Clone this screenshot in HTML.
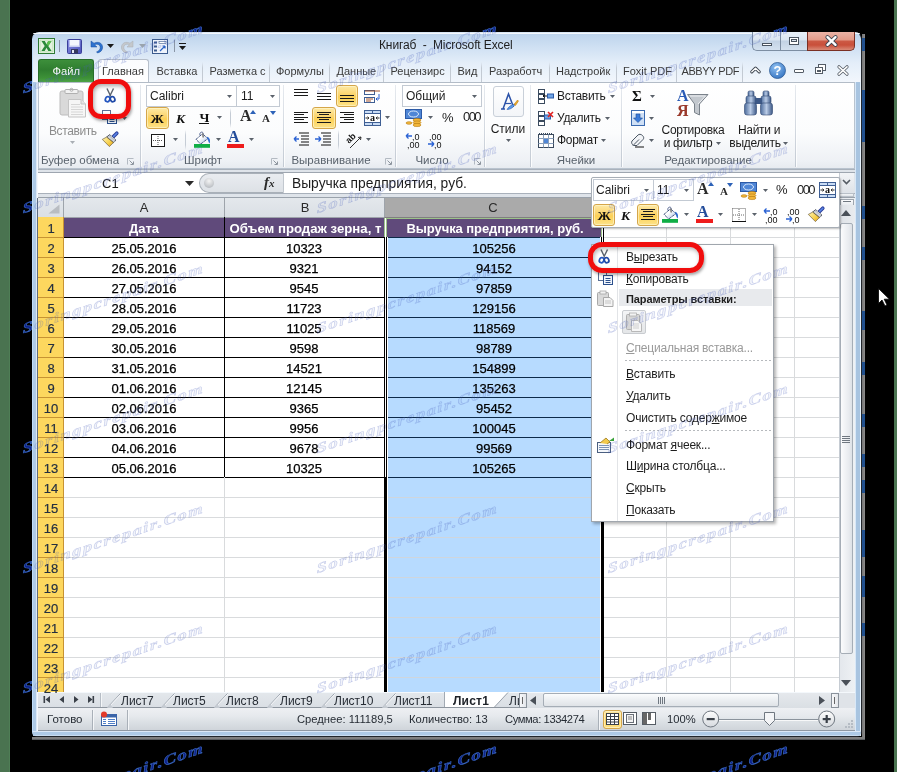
<!DOCTYPE html><html><head><meta charset="utf-8"><style>
*{margin:0;padding:0;box-sizing:border-box}
body{width:897px;height:772px;overflow:hidden;position:relative;background:#000;font-family:"Liberation Sans",sans-serif}
.a{position:absolute}
svg.a{overflow:visible}
.t{position:absolute;white-space:nowrap;font-size:12px;line-height:14px;color:#1e1e1e}
</style></head><body><div class="a" style="left:0px;top:0px;width:897px;height:772px;background:#000"></div>
<div class="a" style="left:0px;top:0px;width:10px;height:772px;background:linear-gradient(90deg,#4a7350 0,#4a7350 9px,#4f7f56 9px)"></div>
<div class="a" style="left:894px;top:0px;width:3px;height:772px;background:#4a7350"></div>
<div class="a" style="left:862px;top:34px;width:3px;height:706px;background:linear-gradient(90deg,#747474,#8c8c8c)"></div>
<div class="a" style="left:862px;top:38px;width:3px;height:13px;background:#21508e"></div>
<div class="a" style="left:862px;top:90px;width:3px;height:52px;background:#21508e"></div>
<div class="a" style="left:862px;top:206px;width:3px;height:13px;background:#21508e"></div>
<div class="a" style="left:862px;top:247px;width:3px;height:13px;background:#21508e"></div>
<div class="a" style="left:862px;top:311px;width:3px;height:19px;background:#21508e"></div>
<div class="a" style="left:862px;top:362px;width:3px;height:13px;background:#21508e"></div>
<div class="a" style="left:862px;top:414px;width:3px;height:13px;background:#21508e"></div>
<div class="a" style="left:862px;top:454px;width:3px;height:13px;background:#21508e"></div>
<div class="a" style="left:862px;top:480px;width:3px;height:13px;background:#21508e"></div>
<div class="a" style="left:862px;top:530px;width:3px;height:27px;background:#21508e"></div>
<div class="a" style="left:862px;top:576px;width:3px;height:21px;background:#21508e"></div>
<div class="a" style="left:862px;top:623px;width:3px;height:13px;background:#21508e"></div>
<div class="a" style="left:32px;top:737px;width:833px;height:3px;background:linear-gradient(#7a7a7a,#8a8a8a 40%,#4a4e53)"></div>
<div class="a" style="left:32px;top:32px;width:830px;height:705px;background:linear-gradient(#bcd3ec 0px,#cfe0f3 14px,#e4eef9 30px,#f1f6fc 48px,#f4f8fc 50px);border-radius:7px 7px 5px 5px;border:1px solid #22262c;border-left-color:#c0dcf8;border-top-color:#d8e6f4"></div>
<div class="a" style="left:33px;top:33px;width:827px;height:1px;background:#f4f8fd;border-radius:6px 6px 0 0"></div>
<div class="a" style="left:33px;top:82px;width:4px;height:654px;background:linear-gradient(90deg,#aecae6 0,#aecae6 3px,#dce8f6 3px)"></div>
<div class="a" style="left:855px;top:82px;width:6px;height:654px;background:linear-gradient(90deg,#d8e8f8 0,#d8e8f8 1px,#a8c4e0 1px,#a8c4e0 5px,#e8f4ff 5px)"></div>
<div class="a" style="left:33px;top:731px;width:828px;height:5px;background:linear-gradient(#dce8f6 0,#dce8f6 1px,#aecae6 1px,#aecae6 4px,#c8dcf0 4px);border-radius:0 0 4px 4px"></div>
<svg class="a" style="left:38px;top:38px" width="17" height="16" viewBox="0 0 17 16">
<rect x="0.5" y="0.5" width="16" height="15" fill="#f4fbf2" stroke="#2f7a35"/>
<rect x="2" y="2" width="13" height="12" fill="#e3f2de" stroke="#9fcf95" stroke-width="0.6"/>
<path d="M3.5 3 L6.8 3 L8.5 6.3 L10.2 3 L13.5 3 L10.3 8 L13.6 13 L10.3 13 L8.5 9.7 L6.7 13 L3.4 13 L6.7 8 Z" fill="#2a8a3a"/>
<path d="M8.5 6.3 L10.2 3 L13.5 3 L10.3 8 Z" fill="#5cbf4f"/>
</svg>
<div class="a" style="left:59px;top:40px;width:1px;height:12px;background:#8a96a6"></div>
<svg class="a" style="left:67px;top:39px" width="15" height="15" viewBox="0 0 15 15">
<defs><linearGradient id="sv" x1="0" y1="0" x2="1" y2="1"><stop offset="0" stop-color="#8f96e6"/><stop offset="1" stop-color="#4a4fb8"/></linearGradient></defs>
<rect x="0.5" y="0.5" width="14" height="14" rx="1" fill="url(#sv)" stroke="#3a3f9a"/>
<rect x="2.5" y="1" width="10" height="7" fill="#f4f6fd"/>
<rect x="2.5" y="6.5" width="10" height="1.5" fill="#c9cff0"/>
<rect x="4" y="10" width="7" height="4.5" fill="#35385e"/>
<rect x="5" y="11" width="2" height="3" fill="#e4e7f6"/>
</svg>
<svg class="a" style="left:89px;top:39px" width="15" height="15" viewBox="0 0 15 15">
<path d="M2 2 L2 8 L8 8 L5.6 5.8 C7.6 4.6 11 5.2 11.2 8.2 C11.4 10.8 9.4 12.2 7.6 12.8 L8.4 14 C11.6 13.4 13.8 11 13.6 8 C13.3 3.6 8.8 2.2 5 4.2 Z" fill="#2d72cf" stroke="#1a4f9c" stroke-width="0.5"/>
</svg>
<svg class="a" style="left:107px;top:44px" width="7" height="4"><polygon points="0,0 7,0 3.5,4" fill="#1a1a1a"/></svg>
<svg class="a" style="left:120px;top:39px" width="15" height="15" viewBox="0 0 15 15">
<path d="M13 2 L13 8 L7 8 L9.4 5.8 C7.4 4.6 4 5.2 3.8 8.2 C3.6 10.8 5.6 12.2 7.4 12.8 L6.6 14 C3.4 13.4 1.2 11 1.4 8 C1.7 3.6 6.2 2.2 10 4.2 Z" fill="#c4c8cc" stroke="#a8acb2" stroke-width="0.5"/>
</svg>
<svg class="a" style="left:139px;top:44px" width="7" height="4"><polygon points="0,0 7,0 3.5,4" fill="#9aa4ae"/></svg>
<svg class="a" style="left:152px;top:39px" width="16" height="15" viewBox="0 0 16 15">
<rect x="0.5" y="0.5" width="15" height="14" fill="#eef3fb" stroke="#3b5b8e"/>
<rect x="2" y="2.5" width="3" height="2" fill="#3b5b8e"/><rect x="7" y="2.5" width="7" height="2" fill="#fff" stroke="#3b5b8e" stroke-width="0.6"/>
<rect x="2" y="6.5" width="3" height="2" fill="#3b5b8e"/><rect x="2" y="10.5" width="3" height="2" fill="#3b5b8e"/>
<path d="M8 12 L13 7 M13 7 L10.5 7 M13 7 L13 9.5" stroke="#2a62c4" stroke-width="1.2" fill="none"/>
</svg>
<div class="a" style="left:174px;top:40px;width:1px;height:12px;background:#8a96a6"></div>
<div class="a" style="left:179px;top:43px;width:7px;height:1px;background:#1a1a1a"></div>
<svg class="a" style="left:179px;top:46px" width="7" height="4"><polygon points="0,0 7,0 3.5,4" fill="#1a1a1a"/></svg>
<div class="t" style="left:379px;top:37px;font-size:12px;letter-spacing:-0.12px;line-height:16px;color:#1e1e1e">Книгаб&nbsp;&nbsp;-&nbsp;&nbsp;Microsoft Excel</div>
<div class="a" style="left:752px;top:32px;width:29px;height:19px;background:linear-gradient(#e9f0f8 0px,#dae5f1 8px,#c2d2e4 9px,#d4e1ef 18px);border:1px solid #7d8ea3;border-top:none;border-right:none;border-radius:0 0 0 5px"></div>
<div class="a" style="left:762px;top:43px;width:10px;height:3px;background:#fff;border:1px solid #4a5460"></div>
<div class="a" style="left:780px;top:32px;width:28px;height:19px;background:linear-gradient(#e9f0f8 0px,#dae5f1 8px,#c2d2e4 9px,#d4e1ef 18px);border:1px solid #7d8ea3;border-top:none"></div>
<div class="a" style="left:789px;top:37px;width:10px;height:8px;background:#fff;border:1px solid #4a5460"></div>
<div class="a" style="left:791px;top:39px;width:6px;height:3px;background:#dde6f0;border:1px solid #4a5460"></div>
<div class="a" style="left:807px;top:32px;width:48px;height:19px;background:linear-gradient(#eab3a6 0px,#e39a88 8px,#cc5a45 9px,#c94f3a 13px,#d98a77 18px);border:1px solid #7a3024;border-top:none;border-radius:0 0 5px 0"></div>
<svg class="a" style="left:825px;top:35px" width="13" height="12" viewBox="0 0 13 12"><path d="M2.5 2.2 L10.5 9.8 M10.5 2.2 L2.5 9.8" stroke="#3c4450" stroke-width="4.2" stroke-linecap="round"/><path d="M2.5 2.2 L10.5 9.8 M10.5 2.2 L2.5 9.8" stroke="#fff" stroke-width="2.4" stroke-linecap="round"/></svg>
<div class="a" style="left:38px;top:59px;width:56px;height:24px;background:linear-gradient(#3d8f3b 0px,#2f7d2f 10px,#3d9138 18px,#52a84a 23px);border:1px solid #286d2a;border-bottom:none;border-radius:3px 3px 0 0"></div>
<div class="t" style="left:52.5px;top:64px;font-size:11.2px;line-height:14px;color:#fff">Файл</div>
<div class="a" style="left:98px;top:59px;width:51px;height:24px;background:linear-gradient(#fbfcfe,#ffffff);border:1px solid #b7bfca;border-bottom:none;border-radius:3px 3px 0 0"></div>
<div class="t" style="left:102px;top:64px;font-size:11px;line-height:14px;color:#3a3a3a">Главная</div>
<div class="t" style="left:156.5px;top:64px;font-size:11px;line-height:14px;color:#3a3a3a">Вставка</div>
<div class="t" style="left:209.5px;top:64px;font-size:11px;line-height:14px;color:#3a3a3a">Разметка с</div>
<div class="t" style="left:276px;top:64px;font-size:11px;line-height:14px;color:#3a3a3a">Формулы</div>
<div class="t" style="left:336.5px;top:64px;font-size:11px;line-height:14px;color:#3a3a3a">Данные</div>
<div class="t" style="left:390.5px;top:64px;font-size:11px;line-height:14px;color:#3a3a3a">Рецензирс</div>
<div class="t" style="left:457.5px;top:64px;font-size:11px;line-height:14px;color:#3a3a3a">Вид</div>
<div class="t" style="left:489px;top:64px;font-size:11px;line-height:14px;color:#3a3a3a">Разработч</div>
<div class="t" style="left:556px;top:64px;font-size:11px;line-height:14px;color:#3a3a3a">Надстройк</div>
<div class="t" style="left:623px;top:64px;font-size:11px;line-height:14px;color:#3a3a3a">Foxit PDF</div>
<div class="t" style="left:681.5px;top:64px;font-size:11px;line-height:14px;color:#3a3a3a;letter-spacing:-0.45px">ABBYY PDF</div>
<div class="a" style="left:202px;top:62px;width:1px;height:20px;background:linear-gradient(rgba(200,208,218,0),#c3cad3 30%,#c3cad3)"></div>
<div class="a" style="left:269px;top:62px;width:1px;height:20px;background:linear-gradient(rgba(200,208,218,0),#c3cad3 30%,#c3cad3)"></div>
<div class="a" style="left:329px;top:62px;width:1px;height:20px;background:linear-gradient(rgba(200,208,218,0),#c3cad3 30%,#c3cad3)"></div>
<div class="a" style="left:383px;top:62px;width:1px;height:20px;background:linear-gradient(rgba(200,208,218,0),#c3cad3 30%,#c3cad3)"></div>
<div class="a" style="left:450px;top:62px;width:1px;height:20px;background:linear-gradient(rgba(200,208,218,0),#c3cad3 30%,#c3cad3)"></div>
<div class="a" style="left:481px;top:62px;width:1px;height:20px;background:linear-gradient(rgba(200,208,218,0),#c3cad3 30%,#c3cad3)"></div>
<div class="a" style="left:549px;top:62px;width:1px;height:20px;background:linear-gradient(rgba(200,208,218,0),#c3cad3 30%,#c3cad3)"></div>
<div class="a" style="left:616px;top:62px;width:1px;height:20px;background:linear-gradient(rgba(200,208,218,0),#c3cad3 30%,#c3cad3)"></div>
<div class="a" style="left:676px;top:62px;width:1px;height:20px;background:linear-gradient(rgba(200,208,218,0),#c3cad3 30%,#c3cad3)"></div>
<div class="a" style="left:742px;top:62px;width:1px;height:20px;background:linear-gradient(rgba(200,208,218,0),#c3cad3 30%,#c3cad3)"></div>
<svg class="a" style="left:750px;top:66px" width="11" height="8"><path d="M1.8 5.8 L5.5 2.2 L9.2 5.8" stroke="#3d4550" stroke-width="3.2" fill="none" stroke-linecap="round" stroke-linejoin="round"/><path d="M1.8 5.8 L5.5 2.2 L9.2 5.8" stroke="#fff" stroke-width="1.3" fill="none" stroke-linecap="round" stroke-linejoin="round"/></svg>
<svg class="a" style="left:769px;top:62px" width="17" height="17" viewBox="0 0 17 17"><defs><radialGradient id="hg" cx="0.4" cy="0.3" r="0.8"><stop offset="0" stop-color="#8fc0f2"/><stop offset="1" stop-color="#2f6fbf"/></radialGradient></defs><circle cx="8.5" cy="8.5" r="8" fill="url(#hg)" stroke="#2e5c96" stroke-width="0.8"/><text x="8.5" y="13.3" text-anchor="middle" font-family="Liberation Sans" font-weight="bold" font-size="13" fill="#fff">?</text></svg>
<div class="a" style="left:794px;top:69px;width:10px;height:4px;background:#fff;border:1px solid #545c66;border-radius:1px"></div>
<div class="a" style="left:815px;top:67px;width:8px;height:7px;background:#fff;border:1px solid #545c66"></div>
<div class="a" style="left:818px;top:64px;width:8px;height:7px;background:#fff;border:1px solid #545c66"></div>
<div class="a" style="left:815px;top:67px;width:8px;height:7px;background:#fff;border:1px solid #545c66"></div>
<div class="a" style="left:817px;top:70px;width:4px;height:2px;background:#545c66"></div>
<svg class="a" style="left:837px;top:65px" width="12" height="11" viewBox="0 0 12 11"><path d="M2 1.8 L10 9.2 M10 1.8 L2 9.2" stroke="#545c66" stroke-width="3.2" stroke-linecap="round"/><path d="M2 1.8 L10 9.2 M10 1.8 L2 9.2" stroke="#fff" stroke-width="1.6" stroke-linecap="round"/></svg>
<div class="a" style="left:38px;top:82px;width:817px;height:87px;background:linear-gradient(#ffffff 0px,#fbfcfd 50px,#eef1f5 78px,#e5e9ee 87px);border:1px solid #b9c3ce;border-top-color:#b3bcc7"></div>
<div class="a" style="left:140px;top:85px;width:1px;height:82px;background:linear-gradient(#e6eaef,#d0d6de 60%,#c3cad3)"></div>
<div class="a" style="left:141px;top:85px;width:1px;height:82px;background:rgba(255,255,255,0.8)"></div>
<div class="a" style="left:283px;top:85px;width:1px;height:82px;background:linear-gradient(#e6eaef,#d0d6de 60%,#c3cad3)"></div>
<div class="a" style="left:284px;top:85px;width:1px;height:82px;background:rgba(255,255,255,0.8)"></div>
<div class="a" style="left:395px;top:85px;width:1px;height:82px;background:linear-gradient(#e6eaef,#d0d6de 60%,#c3cad3)"></div>
<div class="a" style="left:396px;top:85px;width:1px;height:82px;background:rgba(255,255,255,0.8)"></div>
<div class="a" style="left:484px;top:85px;width:1px;height:82px;background:linear-gradient(#e6eaef,#d0d6de 60%,#c3cad3)"></div>
<div class="a" style="left:485px;top:85px;width:1px;height:82px;background:rgba(255,255,255,0.8)"></div>
<div class="a" style="left:530px;top:85px;width:1px;height:82px;background:linear-gradient(#e6eaef,#d0d6de 60%,#c3cad3)"></div>
<div class="a" style="left:531px;top:85px;width:1px;height:82px;background:rgba(255,255,255,0.8)"></div>
<div class="a" style="left:621px;top:85px;width:1px;height:82px;background:linear-gradient(#e6eaef,#d0d6de 60%,#c3cad3)"></div>
<div class="a" style="left:622px;top:85px;width:1px;height:82px;background:rgba(255,255,255,0.8)"></div>
<div class="a" style="left:795px;top:85px;width:1px;height:82px;background:linear-gradient(#e6eaef,#d0d6de 60%,#c3cad3)"></div>
<div class="a" style="left:796px;top:85px;width:1px;height:82px;background:rgba(255,255,255,0.8)"></div>
<svg class="a" style="left:59px;top:88px" width="28" height="30" viewBox="0 0 28 30">
<rect x="1" y="3" width="23" height="24" rx="2" fill="#d9d9d9" stroke="#bcbcbc"/>
<rect x="6" y="1.5" width="13" height="4" rx="1" fill="#f2f2f2" stroke="#b0b0b0"/>
<circle cx="12.5" cy="1.8" r="1.5" fill="none" stroke="#b0b0b0"/>
<path d="M9.5 11.5 L22 11.5 L26.5 16 L26.5 29 L9.5 29 Z" fill="#f6f6f6" stroke="#c4c4c4"/>
<path d="M22 11.5 L22 16 L26.5 16" fill="#e4e4e4" stroke="#c4c4c4"/>
<path d="M12 16.5 H21 M12 19 H24 M12 21.5 H24 M12 24 H24 M12 26.5 H24" stroke="#d6d6d6"/>
</svg>
<div class="t" style="left:49px;top:124px;font-size:12px;line-height:14px;color:#8d8d8d;letter-spacing:-0.4px">Вставить</div>
<svg class="a" style="left:69.5px;top:140.5px" width="5" height="3"><polygon points="0,0 5,0 2.5,3" fill="#a9aeb4"/></svg>
<svg class="a" style="left:104px;top:88px" width="12" height="15" viewBox="0 0 12 15">
<path d="M3 0.5 L6.8 8.5 M9.5 0.5 L5.6 8.5" stroke="#5a626c" stroke-width="1.4"/>
<ellipse cx="3.6" cy="11.2" rx="2.2" ry="2.6" transform="rotate(25 3.6 11.2)" fill="#fff" stroke="#2456c0" stroke-width="1.7"/>
<ellipse cx="8.6" cy="11.2" rx="2.2" ry="2.6" transform="rotate(-25 8.6 11.2)" fill="#fff" stroke="#1f4aa8" stroke-width="1.7"/>
</svg>
<svg class="a" style="left:101px;top:110px" width="17" height="14" viewBox="0 0 17 14">
<rect x="1.5" y="0.5" width="8" height="9" fill="#fff" stroke="#5a6f95"/>
<rect x="6.5" y="4.5" width="9" height="9" fill="#f2f6fc" stroke="#2b4f8c"/>
<path d="M8.5 7.5 H13.5 M8.5 9.5 H13.5 M8.5 11.5 H13.5" stroke="#2b4f8c"/>
</svg>
<svg class="a" style="left:121.5px;top:116.5px" width="5" height="3"><polygon points="0,0 5,0 2.5,3" fill="#5b626b"/></svg>
<svg class="a" style="left:102px;top:132px" width="17" height="15" viewBox="0 0 17 15">
<defs><linearGradient id="bri" x1="0" y1="0" x2="1" y2="1"><stop offset="0" stop-color="#fff5b8"/><stop offset="0.6" stop-color="#f7d04a"/><stop offset="1" stop-color="#d99a1c"/></linearGradient></defs>
<path d="M14.8 1.2 L11 5" stroke="#2c3f9a" stroke-width="3.6" stroke-linecap="round"/>
<path d="M14.8 1.2 L11.5 4.5" stroke="#5a86e8" stroke-width="1.6" stroke-linecap="round"/>
<polygon points="4.6,5.1 7.6,2.6 14,8.2 11.4,10.6" fill="#b9bec6" stroke="#3d434b" stroke-width="0.8"/>
<path d="M6.5 4.5 L12.5 9.5 M8.5 3.7 L13 7.8" stroke="#eef0f2" stroke-width="0.7"/>
<polygon points="0.3,7.4 4.6,5.1 11.4,10.6 7.4,14.6" fill="url(#bri)" stroke="#5a4a2a" stroke-width="0.6"/>
</svg>
<div class="t" style="left:-70px;width:300px;text-align:center;top:153px;font-size:11.5px;line-height:14px;color:#59626c">Буфер обмена</div>
<svg class="a" style="left:126px;top:157px" width="9" height="9"><path d="M1.5 7.5 L1.5 1.5 L7.5 1.5" stroke="#b3bac2" fill="none"/><path d="M3.5 3.5 L7 7 M7.5 4.5 L7.5 7.5 L4.5 7.5" stroke="#8d959e" stroke-width="1" fill="none"/></svg>
<div class="a" style="left:146px;top:85px;width:91px;height:22px;background:#fff;border:1px solid #c3cad3"></div>
<div class="t" style="left:150px;top:89px;font-size:12px;line-height:14px;color:#1c1c1c">Calibri</div>
<svg class="a" style="left:226.5px;top:94.5px" width="5" height="3"><polygon points="0,0 5,0 2.5,3" fill="#5b626b"/></svg>
<div class="a" style="left:236px;top:85px;width:44px;height:22px;background:#fff;border:1px solid #c3cad3"></div>
<div class="t" style="left:241px;top:89px;font-size:12px;line-height:14px;color:#1c1c1c">11</div>
<svg class="a" style="left:269.5px;top:94.5px" width="5" height="3"><polygon points="0,0 5,0 2.5,3" fill="#5b626b"/></svg>
<div class="a" style="left:146px;top:107px;width:23px;height:22px;background:linear-gradient(#fde9a6 0%,#fcd46b 45%,#fcd055 55%,#fde38b 100%);border:1px solid #d5a64a;border-radius:3px;box-shadow:inset 0 0 0 1px rgba(255,248,210,0.6)"></div>
<div class="t" style="left:150.5px;top:110.5px;font-family:'Liberation Serif';font-weight:bold;font-size:13.5px;line-height:16px;color:#111">Ж</div>
<div class="t" style="left:176px;top:110.5px;font-family:'Liberation Serif';font-weight:bold;font-style:italic;font-size:13.5px;line-height:16px;color:#111">К</div>
<div class="t" style="left:199.5px;top:109.5px;font-family:'Liberation Serif';font-weight:bold;font-size:13.5px;line-height:16px;color:#111">Ч</div>
<div class="a" style="left:199px;top:123px;width:10px;height:1px;background:#111"></div>
<svg class="a" style="left:216.5px;top:115.5px" width="5" height="3"><polygon points="0,0 5,0 2.5,3" fill="#5b626b"/></svg>
<div class="a" style="left:230px;top:108px;width:1px;height:20px;background:linear-gradient(rgba(190,198,208,0),#c5ccd5 25%,#c5ccd5 75%,rgba(190,198,208,0))"></div>
<div class="t" style="left:240px;top:107px;font-family:'Liberation Serif';font-weight:bold;font-size:16px;line-height:18px;color:#2b2b2b">A</div>
<svg class="a" style="left:250px;top:110px" width="6" height="4"><polygon points="0,4 6,4 3,0" fill="#2d62b8"/></svg>
<div class="t" style="left:262px;top:112px;font-family:'Liberation Serif';font-weight:bold;font-size:11px;line-height:13px;color:#2b2b2b">A</div>
<svg class="a" style="left:270px;top:111px" width="6" height="4"><polygon points="0,0 6,0 3,4" fill="#2d62b8"/></svg>
<svg class="a" style="left:151px;top:134px" width="14" height="13" viewBox="0 0 14 13">
<rect x="0.5" y="0.5" width="13" height="12" fill="#fff" stroke="#1a1a1a"/>
<path d="M7 2 V11 M2 6.5 H12" stroke="#555" stroke-dasharray="1 1"/>
</svg>
<svg class="a" style="left:172.5px;top:137.5px" width="5" height="3"><polygon points="0,0 5,0 2.5,3" fill="#5b626b"/></svg>
<div class="a" style="left:185px;top:130px;width:1px;height:20px;background:linear-gradient(rgba(190,198,208,0),#c5ccd5 25%,#c5ccd5 75%,rgba(190,198,208,0))"></div>
<svg class="a" style="left:194px;top:131px" width="17" height="18" viewBox="0 0 17 18">
<defs><linearGradient id="bk" x1="0" y1="0" x2="1" y2="1"><stop offset="0.4" stop-color="#ffffff"/><stop offset="1" stop-color="#9fb8e0"/></linearGradient></defs>
<path d="M2 8.4 L8.5 2.8 L13.9 7.6 L6.7 13 Z" fill="url(#bk)" stroke="#22386a" stroke-width="1" stroke-dasharray="1.2 0.6"/>
<path d="M6 4.5 C5 1 8.5 0 9.5 2.5" stroke="#4a5a8a" stroke-width="0.9" fill="none"/>
<path d="M8.8 2.5 L9.2 6.5" stroke="#666" stroke-width="1.3"/>
<path d="M12.8 5.8 C15.5 6 16.8 9.5 15.6 12.5 C14.6 11.5 14.2 9.5 13.6 8.2 Z" fill="#2f6ad0"/>
<rect x="0" y="13" width="16" height="3.8" fill="#0fae45"/>
</svg>
<svg class="a" style="left:215.5px;top:137.5px" width="5" height="3"><polygon points="0,0 5,0 2.5,3" fill="#5b626b"/></svg>
<div class="t" style="left:228px;top:129px;font-family:'Liberation Serif';font-weight:bold;font-size:16px;line-height:16px;color:#234c9a">A</div>
<div class="a" style="left:227px;top:144px;width:17px;height:4px;background:#ee1c1c"></div>
<svg class="a" style="left:248.5px;top:137.5px" width="5" height="3"><polygon points="0,0 5,0 2.5,3" fill="#5b626b"/></svg>
<div class="t" style="left:53px;width:300px;text-align:center;top:153px;font-size:11.5px;line-height:14px;color:#59626c">Шрифт</div>
<svg class="a" style="left:270px;top:157px" width="9" height="9"><path d="M1.5 7.5 L1.5 1.5 L7.5 1.5" stroke="#b3bac2" fill="none"/><path d="M3.5 3.5 L7 7 M7.5 4.5 L7.5 7.5 L4.5 7.5" stroke="#8d959e" stroke-width="1" fill="none"/></svg>
<svg class="a" style="left:294px;top:89px" width="20" height="16"><rect x="0" y="0" width="14" height="1" fill="#1a1a1a"/><rect x="0" y="3" width="14" height="1" fill="#1a1a1a"/><rect x="0" y="6" width="14" height="1" fill="#1a1a1a"/></svg>
<svg class="a" style="left:317px;top:93px" width="20" height="16"><rect x="0" y="0" width="14" height="1" fill="#1a1a1a"/><rect x="0" y="3" width="14" height="1" fill="#1a1a1a"/><rect x="0" y="6" width="14" height="1" fill="#1a1a1a"/></svg>
<div class="a" style="left:336px;top:85px;width:22px;height:22px;background:linear-gradient(#fde9a6 0%,#fcd46b 45%,#fcd055 55%,#fde38b 100%);border:1px solid #d5a64a;border-radius:3px;box-shadow:inset 0 0 0 1px rgba(255,248,210,0.6)"></div>
<svg class="a" style="left:340px;top:95px" width="20" height="16"><rect x="0" y="0" width="14" height="1" fill="#1a1a1a"/><rect x="0" y="3" width="14" height="1" fill="#1a1a1a"/><rect x="0" y="6" width="14" height="1" fill="#1a1a1a"/></svg>
<svg class="a" style="left:364px;top:88px" width="17" height="16" viewBox="0 0 17 16">
<rect x="0.5" y="2.5" width="10" height="4" fill="#fff" stroke="#3f5f94"/>
<rect x="0.5" y="9.5" width="10" height="5" fill="#fff" stroke="#3f5f94"/>
<path d="M1 3 H16" stroke="#a0522d"/>
<path d="M2 11 H9 M2 13 H7" stroke="#a0522d"/>
<path d="M15 6 V11 H12 M13.5 9.5 L12 11 L13.5 12.5" stroke="#2a5fcf" fill="none"/>
</svg>
<svg class="a" style="left:294px;top:112px" width="20" height="16"><rect x="0" y="0" width="14" height="1" fill="#1a1a1a"/><rect x="0" y="2" width="10" height="1" fill="#1a1a1a"/><rect x="0" y="5" width="14" height="1" fill="#1a1a1a"/><rect x="0" y="7" width="10" height="1" fill="#1a1a1a"/><rect x="0" y="10" width="14" height="1" fill="#1a1a1a"/></svg>
<div class="a" style="left:312px;top:107px;width:24px;height:22px;background:linear-gradient(#fde9a6 0%,#fcd46b 45%,#fcd055 55%,#fde38b 100%);border:1px solid #d5a64a;border-radius:3px;box-shadow:inset 0 0 0 1px rgba(255,248,210,0.6)"></div>
<svg class="a" style="left:317px;top:112px" width="20" height="16"><rect x="0" y="0" width="14" height="1" fill="#1a1a1a"/><rect x="2" y="2" width="10" height="1" fill="#1a1a1a"/><rect x="0" y="5" width="14" height="1" fill="#1a1a1a"/><rect x="2" y="7" width="10" height="1" fill="#1a1a1a"/><rect x="0" y="10" width="14" height="1" fill="#1a1a1a"/></svg>
<svg class="a" style="left:340px;top:112px" width="20" height="16"><rect x="0" y="0" width="14" height="1" fill="#1a1a1a"/><rect x="4" y="2" width="10" height="1" fill="#1a1a1a"/><rect x="0" y="5" width="14" height="1" fill="#1a1a1a"/><rect x="4" y="7" width="10" height="1" fill="#1a1a1a"/><rect x="0" y="10" width="14" height="1" fill="#1a1a1a"/></svg>
<svg class="a" style="left:364px;top:110px" width="17" height="16" viewBox="0 0 17 16">
<rect x="0.5" y="0.5" width="16" height="15" fill="#c9dcf5" stroke="#3f5f94"/>
<path d="M0.5 3.5 H16.5 M0.5 12.5 H16.5 M8.5 0.5 V3.5 M8.5 12.5 V15.5" stroke="#3f5f94"/>
<rect x="1" y="4" width="15" height="8" fill="#fff"/>
<path d="M1.5 8 H5 M12 8 H15.5" stroke="#222"/><path d="M3.5 6.5 L5 8 L3.5 9.5 M13.5 6.5 L12 8 L13.5 9.5" stroke="#222" fill="none" stroke-width="0.8"/>
<text x="8.5" y="11" text-anchor="middle" font-family="Liberation Serif" font-weight="bold" font-size="10" fill="#111">a</text>
</svg>
<svg class="a" style="left:384.5px;top:115.5px" width="5" height="3"><polygon points="0,0 5,0 2.5,3" fill="#5b626b"/></svg>
<svg class="a" style="left:293px;top:132px" width="17" height="16" viewBox="0 0 17 16">
<path d="M6 1 H16 M8 4 H16 M8 7 H16 M8 10 H16 M6 13 H16" stroke="#111" stroke-width="1.2"/>
<path d="M1 7 L6 7 M1 7 L3.5 4.5 M1 7 L3.5 9.5" stroke="#2a62d4" stroke-width="1.3" fill="none"/>
</svg>
<svg class="a" style="left:315px;top:132px" width="17" height="16" viewBox="0 0 17 16">
<path d="M6 1 H16 M8 4 H16 M8 7 H16 M8 10 H16 M6 13 H16" stroke="#111" stroke-width="1.2"/>
<path d="M0 7 L6 7 M6 7 L3.5 4.5 M6 7 L3.5 9.5" stroke="#2a62d4" stroke-width="1.3" fill="none"/>
</svg>
<div class="a" style="left:338px;top:130px;width:1px;height:20px;background:linear-gradient(rgba(190,198,208,0),#c5ccd5 25%,#c5ccd5 75%,rgba(190,198,208,0))"></div>
<svg class="a" style="left:346px;top:132px" width="18" height="17" viewBox="0 0 18 17">
<text x="0" y="0" transform="translate(3,12) rotate(-45)" font-family="Liberation Sans" font-weight="bold" font-size="9" fill="#111">ab</text>
<path d="M4 16 L15 5 M15 5 L12 5.5 M15 5 L14.5 8" stroke="#333" stroke-width="1" fill="none"/>
</svg>
<svg class="a" style="left:365.5px;top:137.5px" width="5" height="3"><polygon points="0,0 5,0 2.5,3" fill="#5b626b"/></svg>
<div class="t" style="left:181px;width:300px;text-align:center;top:153px;font-size:11.5px;line-height:14px;color:#59626c">Выравнивание</div>
<svg class="a" style="left:384px;top:157px" width="9" height="9"><path d="M1.5 7.5 L1.5 1.5 L7.5 1.5" stroke="#b3bac2" fill="none"/><path d="M3.5 3.5 L7 7 M7.5 4.5 L7.5 7.5 L4.5 7.5" stroke="#8d959e" stroke-width="1" fill="none"/></svg>
<div class="a" style="left:402px;top:85px;width:80px;height:22px;background:#fff;border:1px solid #c3cad3"></div>
<div class="t" style="left:406px;top:89px;font-size:12px;line-height:14px;color:#1c1c1c">Общий</div>
<svg class="a" style="left:471.5px;top:94.5px" width="5" height="3"><polygon points="0,0 5,0 2.5,3" fill="#5b626b"/></svg>
<svg class="a" style="left:405px;top:109px" width="18" height="18" viewBox="0 0 18 18">
<rect x="0.5" y="0.5" width="16" height="9" fill="#4f86d6" stroke="#2c5aa6"/>
<ellipse cx="8.5" cy="5" rx="5" ry="3" fill="none" stroke="#d6e6fb"/>
<ellipse cx="12" cy="11" rx="4" ry="1.6" fill="#f3b73b" stroke="#b57b10" stroke-width="0.6"/>
<ellipse cx="12" cy="13.5" rx="4" ry="1.6" fill="#f3b73b" stroke="#b57b10" stroke-width="0.6"/>
<ellipse cx="12" cy="16" rx="4" ry="1.6" fill="#f3b73b" stroke="#b57b10" stroke-width="0.6"/>
<ellipse cx="4" cy="14" rx="3" ry="1.3" fill="#f3b73b" stroke="#b57b10" stroke-width="0.6"/>
</svg>
<svg class="a" style="left:427.5px;top:115.5px" width="5" height="3"><polygon points="0,0 5,0 2.5,3" fill="#5b626b"/></svg>
<div class="t" style="left:442px;top:111px;font-size:13px;line-height:14px;color:#1c1c1c">%</div>
<div class="t" style="left:463px;top:110px;font-size:13px;line-height:14px;color:#1c1c1c;letter-spacing:-1.6px">000</div>
<svg class="a" style="left:405px;top:132px" width="18" height="16" viewBox="0 0 18 16">
<path d="M1 4 L7 4 M1 4 L3.5 1.5 M1 4 L3.5 6.5" stroke="#2a62d4" stroke-width="1.3" fill="none"/>
<text x="7" y="8" font-family="Liberation Sans" font-size="9" fill="#111">,0</text>
<text x="2" y="15.5" font-family="Liberation Sans" font-size="9" fill="#111">,00</text>
</svg>
<svg class="a" style="left:427px;top:132px" width="18" height="16" viewBox="0 0 18 16">
<text x="2" y="8" font-family="Liberation Sans" font-size="9" fill="#111">,00</text>
<path d="M1 12 L7 12 M7 12 L4.5 9.5 M7 12 L4.5 14.5" stroke="#2a62d4" stroke-width="1.3" fill="none"/>
<text x="7" y="15.5" font-family="Liberation Sans" font-size="9" fill="#111">,0</text>
</svg>
<div class="t" style="left:282px;width:300px;text-align:center;top:153px;font-size:11.5px;line-height:14px;color:#59626c">Число</div>
<svg class="a" style="left:473px;top:157px" width="9" height="9"><path d="M1.5 7.5 L1.5 1.5 L7.5 1.5" stroke="#b3bac2" fill="none"/><path d="M3.5 3.5 L7 7 M7.5 4.5 L7.5 7.5 L4.5 7.5" stroke="#8d959e" stroke-width="1" fill="none"/></svg>
<div class="a" style="left:493px;top:86px;width:31px;height:31px;background:linear-gradient(#ffffff,#f3f5f8);border:1px solid #c9d0d9;border-radius:3px"></div>
<svg class="a" style="left:500px;top:93px" width="20" height="18" viewBox="0 0 20 18">
<path d="M1 16 H5 M3 16 L8.5 1 L13.5 14" stroke="#2b52a8" stroke-width="1.5" fill="none"/>
<path d="M5 10.5 H11" stroke="#2b52a8" stroke-width="1.2"/>
<path d="M7 16.5 C9 13 12 11.5 15 11 C14 14 11 16.5 7 16.5 Z" fill="#5a9ae8" stroke="#2a5ab0" stroke-width="0.6"/>
<path d="M14 11.5 L17.5 7 L18.5 8 L15.5 12.5 Z" fill="#f0b020" stroke="#b06a10" stroke-width="0.5"/>
</svg>
<div class="t" style="left:358px;width:300px;text-align:center;top:122px;font-size:12px;line-height:14px;color:#1c1c1c">Стили</div>
<svg class="a" style="left:505.5px;top:138.5px" width="5" height="3"><polygon points="0,0 5,0 2.5,3" fill="#5b626b"/></svg>
<svg class="a" style="left:538px;top:89px" width="17" height="16" viewBox="0 0 17 16"><rect x="0.5" y="0.5" width="6" height="4" fill="#fff" stroke="#3a4a5e"/><rect x="0.5" y="5.5" width="6" height="4" fill="#fff" stroke="#3a4a5e"/><rect x="0.5" y="10.5" width="6" height="4" fill="#fff" stroke="#3a4a5e"/><rect x="9.5" y="5" width="6" height="4" fill="#6fa4e6" stroke="#2c5aa6"/><path d="M5 7 H9 M6.5 5.5 L5 7 L6.5 8.5" stroke="#111" fill="none"/></svg>
<div class="t" style="left:557px;top:89px;font-size:12px;line-height:14px;color:#1c1c1c;letter-spacing:-0.3px">Вставить</div>
<svg class="a" style="left:609.5px;top:94.5px" width="5" height="3"><polygon points="0,0 5,0 2.5,3" fill="#5b626b"/></svg>
<svg class="a" style="left:538px;top:111px" width="17" height="16" viewBox="0 0 17 16"><rect x="0.5" y="0.5" width="6" height="4" fill="#fff" stroke="#3a4a5e"/><rect x="0.5" y="5.5" width="6" height="4" fill="#fff" stroke="#3a4a5e"/><rect x="0.5" y="10.5" width="6" height="4" fill="#fff" stroke="#3a4a5e"/><rect x="6.5" y="4" width="6" height="4" fill="#6fa4e6" stroke="#2c5aa6"/><path d="M10 1 L15 6 M15 1 L10 6" stroke="#e02020" stroke-width="1.6"/></svg>
<div class="t" style="left:557px;top:111px;font-size:12px;line-height:14px;color:#1c1c1c;letter-spacing:-0.3px">Удалить</div>
<svg class="a" style="left:604.5px;top:116.5px" width="5" height="3"><polygon points="0,0 5,0 2.5,3" fill="#5b626b"/></svg>
<svg class="a" style="left:538px;top:133px" width="17" height="16" viewBox="0 0 17 16"><rect x="0.5" y="1.5" width="15" height="13" fill="#fff" stroke="#3a4a5e"/><path d="M0.5 5.5 H15.5 M0.5 10.5 H15.5 M5.5 1.5 V14.5 M10.5 1.5 V14.5" stroke="#8aa0bd"/><rect x="6" y="6" width="4" height="4" fill="#4f86d6"/><path d="M1 0.5 H15" stroke="#3a4a5e" stroke-dasharray="1 1"/></svg>
<div class="t" style="left:557px;top:133px;font-size:12px;line-height:14px;color:#1c1c1c;letter-spacing:-0.3px">Формат</div>
<svg class="a" style="left:600.5px;top:138.5px" width="5" height="3"><polygon points="0,0 5,0 2.5,3" fill="#5b626b"/></svg>
<div class="t" style="left:426px;width:300px;text-align:center;top:153px;font-size:11.5px;line-height:14px;color:#59626c">Ячейки</div>
<div class="t" style="left:632px;top:89px;font-family:'Liberation Serif';font-weight:bold;font-size:15px;line-height:14px;color:#111">Σ</div>
<svg class="a" style="left:649.5px;top:94.5px" width="5" height="3"><polygon points="0,0 5,0 2.5,3" fill="#5b626b"/></svg>
<svg class="a" style="left:631px;top:110px" width="14" height="16" viewBox="0 0 14 16">
<rect x="0.5" y="0.5" width="13" height="15" fill="#cfe0f6" stroke="#3a6ab0"/>
<rect x="1" y="1" width="12" height="2" fill="#ffffff"/>
<path d="M5 4 H9 V8 H11.5 L7 12.5 L2.5 8 H5 Z" fill="#3a7ad8" stroke="#204f9c" stroke-width="0.6"/>
</svg>
<svg class="a" style="left:648.5px;top:116.5px" width="5" height="3"><polygon points="0,0 5,0 2.5,3" fill="#5b626b"/></svg>
<svg class="a" style="left:630px;top:132px" width="16" height="16" viewBox="0 0 16 16">
<path d="M2 9 L8 3 C9 2 11 2 12.5 3.5 C14 5 14 6.5 13 7.5 L7 13.5 L3.5 13.5 C2 12.5 1 10.5 2 9 Z" fill="#f2f4f7" stroke="#4a5562"/>
<path d="M3 13.5 L9 7.5" stroke="#4a5562"/>
<path d="M5 15 H14" stroke="#111"/>
</svg>
<svg class="a" style="left:648.5px;top:138.5px" width="5" height="3"><polygon points="0,0 5,0 2.5,3" fill="#5b626b"/></svg>
<svg class="a" style="left:676px;top:87px" width="34" height="31" viewBox="0 0 34 31">
<text x="1" y="14" font-family="Liberation Serif" font-weight="bold" font-size="16" fill="#2a5bb5">A</text>
<text x="1" y="29" font-family="Liberation Serif" font-weight="bold" font-size="16" fill="#9a3a2c">Я</text>
<path d="M11.5 7.5 H32 L23.5 17 V28 L18.5 25.5 V17 Z" fill="#c3c8ce" stroke="#7a828b"/>
<path d="M14 9 H29.5 L22 17" stroke="#eef0f3" fill="none"/>
</svg>
<div class="t" style="left:543px;width:300px;text-align:center;top:123px;font-size:12px;line-height:14px;color:#1c1c1c;letter-spacing:-0.3px">Сортировка</div>
<div class="t" style="left:538px;width:300px;text-align:center;top:136px;font-size:12px;line-height:14px;color:#1c1c1c;letter-spacing:-0.3px">и фильтр</div>
<svg class="a" style="left:715.5px;top:141.5px" width="5" height="3"><polygon points="0,0 5,0 2.5,3" fill="#5b626b"/></svg>
<svg class="a" style="left:744px;top:90px" width="29" height="26" viewBox="0 0 29 26">
<defs><linearGradient id="bn" x1="0" x2="1"><stop offset="0" stop-color="#4a6a9a"/><stop offset="0.5" stop-color="#b9cbe6"/><stop offset="1" stop-color="#3c5886"/></linearGradient></defs>
<rect x="4" y="1" width="6" height="6" rx="1.5" fill="url(#bn)" stroke="#2f4670" stroke-width="0.6"/>
<rect x="19" y="1" width="6" height="6" rx="1.5" fill="url(#bn)" stroke="#2f4670" stroke-width="0.6"/>
<rect x="2" y="6" width="10" height="8" rx="2" fill="url(#bn)" stroke="#2f4670" stroke-width="0.6"/>
<rect x="17" y="6" width="10" height="8" rx="2" fill="url(#bn)" stroke="#2f4670" stroke-width="0.6"/>
<rect x="11" y="8" width="7" height="6" fill="#3c5886"/>
<rect x="0.5" y="13" width="12" height="12" rx="2.5" fill="url(#bn)" stroke="#2f4670" stroke-width="0.6"/>
<rect x="16.5" y="13" width="12" height="12" rx="2.5" fill="url(#bn)" stroke="#2f4670" stroke-width="0.6"/>
</svg>
<div class="t" style="left:609px;width:300px;text-align:center;top:123px;font-size:12px;line-height:14px;color:#1c1c1c;letter-spacing:-0.3px">Найти и</div>
<div class="t" style="left:605px;width:300px;text-align:center;top:136px;font-size:12px;line-height:14px;color:#1c1c1c;letter-spacing:-0.3px">выделить</div>
<svg class="a" style="left:782.5px;top:141.5px" width="5" height="3"><polygon points="0,0 5,0 2.5,3" fill="#5b626b"/></svg>
<div class="t" style="left:558px;width:300px;text-align:center;top:153px;font-size:11.5px;line-height:14px;color:#59626c">Редактирование</div>
<div class="a" style="left:38px;top:169px;width:817px;height:28px;background:#dfe4ea;border-top:1px solid #a9b1bb"></div>
<div class="a" style="left:38px;top:172px;width:817px;height:1px;background:#9ea6b0"></div>
<div class="a" style="left:38px;top:173px;width:801px;height:20px;background:#fff"></div>
<div class="a" style="left:38px;top:193px;width:817px;height:1px;background:#a9b1bb"></div>
<div class="a" style="left:38px;top:197px;width:817px;height:1px;background:#9aa2ab"></div>
<div class="t" style="left:102px;top:177px;font-size:13px;line-height:14px;color:#1c1c1c">C1</div>
<svg class="a" style="left:185px;top:181px" width="9" height="5"><polygon points="0,0 9,0 4.5,5" fill="#2a2a2a"/></svg>
<div class="a" style="left:199px;top:173px;width:85px;height:20px;background:linear-gradient(#e9ecf0,#dde1e6);border:1px solid #a9b0b8;border-right:1px solid #c2c8cf;border-radius:10px 0 0 10px"></div>
<svg class="a" style="left:203px;top:177px" width="12" height="12"><defs><radialGradient id="rb" cx="0.5" cy="0.3" r="0.7"><stop offset="0" stop-color="#f4f4f4"/><stop offset="1" stop-color="#b8bcc1"/></radialGradient></defs><circle cx="6" cy="6" r="5" fill="url(#rb)"/></svg>
<div class="t" style="left:264px;top:174px;font-family:'Liberation Serif';font-weight:bold;font-size:15px;line-height:16px;color:#2a2a2a"><i>f</i><span style='font-size:11px'><i>x</i></span></div>
<div class="t" style="left:292px;top:176.5px;font-size:13.8px;line-height:14px;color:#1c1c1c">Выручка предприятия, руб.</div>
<div class="a" style="left:839px;top:173px;width:15px;height:19px;background:linear-gradient(#f2f4f7,#dfe3e8);border-left:1px solid #c6ccd3"></div>
<svg class="a" style="left:842px;top:179px" width="9" height="6"><path d="M1 1 L4.5 4.5 L8 1" stroke="#555c64" stroke-width="1.6" fill="none"/></svg>
<div class="a" style="left:38px;top:198px;width:801px;height:494px;background:#fff"></div>
<div class="a" style="left:38px;top:198px;width:801px;height:19px;background:linear-gradient(#e4e8ec,#dadfe5)"></div>
<div class="a" style="left:385px;top:198px;width:218px;height:19px;background:#aaaaaa"></div>
<div class="a" style="left:38px;top:217px;width:801px;height:1px;background:#9ea4ab"></div>
<div class="a" style="left:385px;top:217px;width:218px;height:1px;background:#808080"></div>
<div class="a" style="left:384px;top:198px;width:1px;height:20px;background:#8c8c8c"></div>
<div class="a" style="left:602px;top:198px;width:1px;height:20px;background:#8c8c8c"></div>
<div class="a" style="left:63px;top:198px;width:1px;height:19px;background:#9ea4ab"></div>
<div class="a" style="left:224px;top:198px;width:1px;height:19px;background:#9ea4ab"></div>
<div class="a" style="left:384px;top:198px;width:1px;height:19px;background:#9ea4ab"></div>
<div class="a" style="left:602px;top:198px;width:1px;height:19px;background:#9ea4ab"></div>
<div class="a" style="left:666px;top:198px;width:1px;height:19px;background:#9ea4ab"></div>
<div class="a" style="left:730px;top:198px;width:1px;height:19px;background:#9ea4ab"></div>
<div class="a" style="left:794px;top:198px;width:1px;height:19px;background:#9ea4ab"></div>
<div class="t" style="left:-6px;width:300px;text-align:center;top:201px;font-size:13px;color:#2a2a2a">A</div>
<div class="t" style="left:155px;width:300px;text-align:center;top:201px;font-size:13px;color:#2a2a2a">B</div>
<div class="t" style="left:343px;width:300px;text-align:center;top:201px;font-size:13px;color:#2a2a2a">C</div>
<svg class="a" style="left:38px;top:198px" width="26" height="19"><polygon points="21.5,6.5 21.5,15.5 10.5,15.5" fill="#b9bdc2"/></svg>
<div class="a" style="left:38px;top:217px;width:26px;height:475px;background:#fdd75e"></div>
<div class="a" style="left:37px;top:198px;width:1px;height:494px;background:#5f6e80"></div>
<div class="a" style="left:63px;top:217px;width:1px;height:475px;background:#c79333"></div>
<div class="a" style="left:38px;top:237px;width:25px;height:1px;background:#c79333"></div>
<div class="t" style="left:-99px;width:300px;text-align:center;top:222px;font-size:13px;color:#253040;-webkit-text-stroke:0.2px #253040">1</div>
<div class="a" style="left:38px;top:257px;width:25px;height:1px;background:#c79333"></div>
<div class="t" style="left:-99px;width:300px;text-align:center;top:242px;font-size:13px;color:#253040;-webkit-text-stroke:0.2px #253040">2</div>
<div class="a" style="left:38px;top:277px;width:25px;height:1px;background:#c79333"></div>
<div class="t" style="left:-99px;width:300px;text-align:center;top:262px;font-size:13px;color:#253040;-webkit-text-stroke:0.2px #253040">3</div>
<div class="a" style="left:38px;top:297px;width:25px;height:1px;background:#c79333"></div>
<div class="t" style="left:-99px;width:300px;text-align:center;top:282px;font-size:13px;color:#253040;-webkit-text-stroke:0.2px #253040">4</div>
<div class="a" style="left:38px;top:317px;width:25px;height:1px;background:#c79333"></div>
<div class="t" style="left:-99px;width:300px;text-align:center;top:302px;font-size:13px;color:#253040;-webkit-text-stroke:0.2px #253040">5</div>
<div class="a" style="left:38px;top:337px;width:25px;height:1px;background:#c79333"></div>
<div class="t" style="left:-99px;width:300px;text-align:center;top:322px;font-size:13px;color:#253040;-webkit-text-stroke:0.2px #253040">6</div>
<div class="a" style="left:38px;top:357px;width:25px;height:1px;background:#c79333"></div>
<div class="t" style="left:-99px;width:300px;text-align:center;top:342px;font-size:13px;color:#253040;-webkit-text-stroke:0.2px #253040">7</div>
<div class="a" style="left:38px;top:377px;width:25px;height:1px;background:#c79333"></div>
<div class="t" style="left:-99px;width:300px;text-align:center;top:362px;font-size:13px;color:#253040;-webkit-text-stroke:0.2px #253040">8</div>
<div class="a" style="left:38px;top:397px;width:25px;height:1px;background:#c79333"></div>
<div class="t" style="left:-99px;width:300px;text-align:center;top:382px;font-size:13px;color:#253040;-webkit-text-stroke:0.2px #253040">9</div>
<div class="a" style="left:38px;top:417px;width:25px;height:1px;background:#c79333"></div>
<div class="t" style="left:-99px;width:300px;text-align:center;top:402px;font-size:13px;color:#253040;-webkit-text-stroke:0.2px #253040">10</div>
<div class="a" style="left:38px;top:437px;width:25px;height:1px;background:#c79333"></div>
<div class="t" style="left:-99px;width:300px;text-align:center;top:422px;font-size:13px;color:#253040;-webkit-text-stroke:0.2px #253040">11</div>
<div class="a" style="left:38px;top:457px;width:25px;height:1px;background:#c79333"></div>
<div class="t" style="left:-99px;width:300px;text-align:center;top:442px;font-size:13px;color:#253040;-webkit-text-stroke:0.2px #253040">12</div>
<div class="a" style="left:38px;top:477px;width:25px;height:1px;background:#c79333"></div>
<div class="t" style="left:-99px;width:300px;text-align:center;top:462px;font-size:13px;color:#253040;-webkit-text-stroke:0.2px #253040">13</div>
<div class="a" style="left:38px;top:497px;width:25px;height:1px;background:#c79333"></div>
<div class="t" style="left:-99px;width:300px;text-align:center;top:482px;font-size:13px;color:#253040;-webkit-text-stroke:0.2px #253040">14</div>
<div class="a" style="left:38px;top:517px;width:25px;height:1px;background:#c79333"></div>
<div class="t" style="left:-99px;width:300px;text-align:center;top:502px;font-size:13px;color:#253040;-webkit-text-stroke:0.2px #253040">15</div>
<div class="a" style="left:38px;top:537px;width:25px;height:1px;background:#c79333"></div>
<div class="t" style="left:-99px;width:300px;text-align:center;top:522px;font-size:13px;color:#253040;-webkit-text-stroke:0.2px #253040">16</div>
<div class="a" style="left:38px;top:557px;width:25px;height:1px;background:#c79333"></div>
<div class="t" style="left:-99px;width:300px;text-align:center;top:542px;font-size:13px;color:#253040;-webkit-text-stroke:0.2px #253040">17</div>
<div class="a" style="left:38px;top:577px;width:25px;height:1px;background:#c79333"></div>
<div class="t" style="left:-99px;width:300px;text-align:center;top:562px;font-size:13px;color:#253040;-webkit-text-stroke:0.2px #253040">18</div>
<div class="a" style="left:38px;top:597px;width:25px;height:1px;background:#c79333"></div>
<div class="t" style="left:-99px;width:300px;text-align:center;top:582px;font-size:13px;color:#253040;-webkit-text-stroke:0.2px #253040">19</div>
<div class="a" style="left:38px;top:617px;width:25px;height:1px;background:#c79333"></div>
<div class="t" style="left:-99px;width:300px;text-align:center;top:602px;font-size:13px;color:#253040;-webkit-text-stroke:0.2px #253040">20</div>
<div class="a" style="left:38px;top:637px;width:25px;height:1px;background:#c79333"></div>
<div class="t" style="left:-99px;width:300px;text-align:center;top:622px;font-size:13px;color:#253040;-webkit-text-stroke:0.2px #253040">21</div>
<div class="a" style="left:38px;top:657px;width:25px;height:1px;background:#c79333"></div>
<div class="t" style="left:-99px;width:300px;text-align:center;top:642px;font-size:13px;color:#253040;-webkit-text-stroke:0.2px #253040">22</div>
<div class="a" style="left:38px;top:677px;width:25px;height:1px;background:#c79333"></div>
<div class="t" style="left:-99px;width:300px;text-align:center;top:662px;font-size:13px;color:#253040;-webkit-text-stroke:0.2px #253040">23</div>
<div class="a" style="left:38px;top:697px;width:25px;height:1px;background:#c79333"></div>
<div class="t" style="left:-99px;width:300px;text-align:center;top:682px;font-size:13px;color:#253040;-webkit-text-stroke:0.2px #253040">24</div>
<div class="a" style="left:388px;top:218px;width:212px;height:474px;background:#b7dbff"></div>
<div class="a" style="left:64px;top:497px;width:320px;height:1px;background:#d9dbdd"></div>
<div class="a" style="left:388px;top:497px;width:212px;height:1px;background:#cfd6dd"></div>
<div class="a" style="left:604px;top:497px;width:235px;height:1px;background:#d9dbdd"></div>
<div class="a" style="left:64px;top:517px;width:320px;height:1px;background:#d9dbdd"></div>
<div class="a" style="left:388px;top:517px;width:212px;height:1px;background:#cfd6dd"></div>
<div class="a" style="left:604px;top:517px;width:235px;height:1px;background:#d9dbdd"></div>
<div class="a" style="left:64px;top:537px;width:320px;height:1px;background:#d9dbdd"></div>
<div class="a" style="left:388px;top:537px;width:212px;height:1px;background:#cfd6dd"></div>
<div class="a" style="left:604px;top:537px;width:235px;height:1px;background:#d9dbdd"></div>
<div class="a" style="left:64px;top:557px;width:320px;height:1px;background:#d9dbdd"></div>
<div class="a" style="left:388px;top:557px;width:212px;height:1px;background:#cfd6dd"></div>
<div class="a" style="left:604px;top:557px;width:235px;height:1px;background:#d9dbdd"></div>
<div class="a" style="left:64px;top:577px;width:320px;height:1px;background:#d9dbdd"></div>
<div class="a" style="left:388px;top:577px;width:212px;height:1px;background:#cfd6dd"></div>
<div class="a" style="left:604px;top:577px;width:235px;height:1px;background:#d9dbdd"></div>
<div class="a" style="left:64px;top:597px;width:320px;height:1px;background:#d9dbdd"></div>
<div class="a" style="left:388px;top:597px;width:212px;height:1px;background:#cfd6dd"></div>
<div class="a" style="left:604px;top:597px;width:235px;height:1px;background:#d9dbdd"></div>
<div class="a" style="left:64px;top:617px;width:320px;height:1px;background:#d9dbdd"></div>
<div class="a" style="left:388px;top:617px;width:212px;height:1px;background:#cfd6dd"></div>
<div class="a" style="left:604px;top:617px;width:235px;height:1px;background:#d9dbdd"></div>
<div class="a" style="left:64px;top:637px;width:320px;height:1px;background:#d9dbdd"></div>
<div class="a" style="left:388px;top:637px;width:212px;height:1px;background:#cfd6dd"></div>
<div class="a" style="left:604px;top:637px;width:235px;height:1px;background:#d9dbdd"></div>
<div class="a" style="left:64px;top:657px;width:320px;height:1px;background:#d9dbdd"></div>
<div class="a" style="left:388px;top:657px;width:212px;height:1px;background:#cfd6dd"></div>
<div class="a" style="left:604px;top:657px;width:235px;height:1px;background:#d9dbdd"></div>
<div class="a" style="left:64px;top:677px;width:320px;height:1px;background:#d9dbdd"></div>
<div class="a" style="left:388px;top:677px;width:212px;height:1px;background:#cfd6dd"></div>
<div class="a" style="left:604px;top:677px;width:235px;height:1px;background:#d9dbdd"></div>
<div class="a" style="left:64px;top:697px;width:320px;height:1px;background:#d9dbdd"></div>
<div class="a" style="left:388px;top:697px;width:212px;height:1px;background:#cfd6dd"></div>
<div class="a" style="left:604px;top:697px;width:235px;height:1px;background:#d9dbdd"></div>
<div class="a" style="left:666px;top:217px;width:1px;height:475px;background:#d9dbdd"></div>
<div class="a" style="left:730px;top:217px;width:1px;height:475px;background:#d9dbdd"></div>
<div class="a" style="left:794px;top:217px;width:1px;height:475px;background:#d9dbdd"></div>
<div class="a" style="left:64px;top:218px;width:320px;height:19px;background:#604a7b"></div>
<div class="a" style="left:387px;top:218px;width:214px;height:19px;background:#604a7b"></div>
<div class="a" style="left:64px;top:237px;width:321px;height:1px;background:#000"></div>
<div class="a" style="left:388px;top:237px;width:212px;height:1px;background:#0d2a4a"></div>
<div class="a" style="left:64px;top:257px;width:321px;height:1px;background:#000"></div>
<div class="a" style="left:388px;top:257px;width:212px;height:1px;background:#0d2a4a"></div>
<div class="a" style="left:64px;top:277px;width:321px;height:1px;background:#000"></div>
<div class="a" style="left:388px;top:277px;width:212px;height:1px;background:#0d2a4a"></div>
<div class="a" style="left:64px;top:297px;width:321px;height:1px;background:#000"></div>
<div class="a" style="left:388px;top:297px;width:212px;height:1px;background:#0d2a4a"></div>
<div class="a" style="left:64px;top:317px;width:321px;height:1px;background:#000"></div>
<div class="a" style="left:388px;top:317px;width:212px;height:1px;background:#0d2a4a"></div>
<div class="a" style="left:64px;top:337px;width:321px;height:1px;background:#000"></div>
<div class="a" style="left:388px;top:337px;width:212px;height:1px;background:#0d2a4a"></div>
<div class="a" style="left:64px;top:357px;width:321px;height:1px;background:#000"></div>
<div class="a" style="left:388px;top:357px;width:212px;height:1px;background:#0d2a4a"></div>
<div class="a" style="left:64px;top:377px;width:321px;height:1px;background:#000"></div>
<div class="a" style="left:388px;top:377px;width:212px;height:1px;background:#0d2a4a"></div>
<div class="a" style="left:64px;top:397px;width:321px;height:1px;background:#000"></div>
<div class="a" style="left:388px;top:397px;width:212px;height:1px;background:#0d2a4a"></div>
<div class="a" style="left:64px;top:417px;width:321px;height:1px;background:#000"></div>
<div class="a" style="left:388px;top:417px;width:212px;height:1px;background:#0d2a4a"></div>
<div class="a" style="left:64px;top:437px;width:321px;height:1px;background:#000"></div>
<div class="a" style="left:388px;top:437px;width:212px;height:1px;background:#0d2a4a"></div>
<div class="a" style="left:64px;top:457px;width:321px;height:1px;background:#000"></div>
<div class="a" style="left:388px;top:457px;width:212px;height:1px;background:#0d2a4a"></div>
<div class="a" style="left:64px;top:477px;width:321px;height:1px;background:#000"></div>
<div class="a" style="left:388px;top:477px;width:212px;height:1px;background:#0d2a4a"></div>
<div class="a" style="left:604px;top:237px;width:235px;height:1px;background:#d9dbdd"></div>
<div class="a" style="left:604px;top:257px;width:235px;height:1px;background:#d9dbdd"></div>
<div class="a" style="left:604px;top:277px;width:235px;height:1px;background:#d9dbdd"></div>
<div class="a" style="left:604px;top:297px;width:235px;height:1px;background:#d9dbdd"></div>
<div class="a" style="left:604px;top:317px;width:235px;height:1px;background:#d9dbdd"></div>
<div class="a" style="left:604px;top:337px;width:235px;height:1px;background:#d9dbdd"></div>
<div class="a" style="left:604px;top:357px;width:235px;height:1px;background:#d9dbdd"></div>
<div class="a" style="left:604px;top:377px;width:235px;height:1px;background:#d9dbdd"></div>
<div class="a" style="left:604px;top:397px;width:235px;height:1px;background:#d9dbdd"></div>
<div class="a" style="left:604px;top:417px;width:235px;height:1px;background:#d9dbdd"></div>
<div class="a" style="left:604px;top:437px;width:235px;height:1px;background:#d9dbdd"></div>
<div class="a" style="left:604px;top:457px;width:235px;height:1px;background:#d9dbdd"></div>
<div class="a" style="left:604px;top:477px;width:235px;height:1px;background:#d9dbdd"></div>
<div class="a" style="left:224px;top:217px;width:1px;height:260px;background:#000"></div>
<div class="a" style="left:224px;top:477px;width:1px;height:215px;background:#d9dbdd"></div>
<div class="a" style="left:384px;top:218px;width:3px;height:474px;background:#000"></div>
<div class="a" style="left:385px;top:218px;width:1px;height:259px;background:#fff"></div>
<div class="a" style="left:601px;top:218px;width:3px;height:474px;background:#000"></div>
<div class="a" style="left:602px;top:237px;width:1px;height:240px;background:#fff"></div>
<div class="a" style="left:384px;top:218px;width:1px;height:19px;background:#9cc38a"></div>
<div class="a" style="left:386px;top:218px;width:1px;height:19px;background:#9cc38a"></div>
<div class="a" style="left:385px;top:218px;width:1px;height:19px;background:#fff"></div>
<div class="a" style="left:387px;top:218px;width:214px;height:1px;background:#9cc38a"></div>
<div class="a" style="left:601px;top:218px;width:1px;height:19px;background:#9cc38a"></div>
<div class="a" style="left:602px;top:218px;width:1px;height:19px;background:#fff"></div>
<div class="t" style="left:-6px;width:300px;text-align:center;top:222px;font-size:13px;font-weight:bold;color:#fff">Дата</div>
<div class="t" style="left:155.5px;width:300px;text-align:center;top:222px;font-size:13.2px;font-weight:bold;color:#fff">Объем продаж зерна, т</div>
<div class="t" style="left:345px;width:300px;text-align:center;top:222px;letter-spacing:-0.07px;font-size:13px;font-weight:bold;color:#fff">Выручка предприятия, руб.</div>
<div class="t" style="left:-6px;width:300px;text-align:center;top:242px;font-size:13px;color:#000;-webkit-text-stroke:0.25px #000">25.05.2016</div>
<div class="t" style="left:154px;width:300px;text-align:center;top:242px;font-size:13px;color:#000;-webkit-text-stroke:0.25px #000">10323</div>
<div class="t" style="left:344px;width:300px;text-align:center;top:242px;font-size:13px;color:#000;-webkit-text-stroke:0.25px #000">105256</div>
<div class="t" style="left:-6px;width:300px;text-align:center;top:262px;font-size:13px;color:#000;-webkit-text-stroke:0.25px #000">26.05.2016</div>
<div class="t" style="left:154px;width:300px;text-align:center;top:262px;font-size:13px;color:#000;-webkit-text-stroke:0.25px #000">9321</div>
<div class="t" style="left:344px;width:300px;text-align:center;top:262px;font-size:13px;color:#000;-webkit-text-stroke:0.25px #000">94152</div>
<div class="t" style="left:-6px;width:300px;text-align:center;top:282px;font-size:13px;color:#000;-webkit-text-stroke:0.25px #000">27.05.2016</div>
<div class="t" style="left:154px;width:300px;text-align:center;top:282px;font-size:13px;color:#000;-webkit-text-stroke:0.25px #000">9545</div>
<div class="t" style="left:344px;width:300px;text-align:center;top:282px;font-size:13px;color:#000;-webkit-text-stroke:0.25px #000">97859</div>
<div class="t" style="left:-6px;width:300px;text-align:center;top:302px;font-size:13px;color:#000;-webkit-text-stroke:0.25px #000">28.05.2016</div>
<div class="t" style="left:154px;width:300px;text-align:center;top:302px;font-size:13px;color:#000;-webkit-text-stroke:0.25px #000">11723</div>
<div class="t" style="left:344px;width:300px;text-align:center;top:302px;font-size:13px;color:#000;-webkit-text-stroke:0.25px #000">129156</div>
<div class="t" style="left:-6px;width:300px;text-align:center;top:322px;font-size:13px;color:#000;-webkit-text-stroke:0.25px #000">29.05.2016</div>
<div class="t" style="left:154px;width:300px;text-align:center;top:322px;font-size:13px;color:#000;-webkit-text-stroke:0.25px #000">11025</div>
<div class="t" style="left:344px;width:300px;text-align:center;top:322px;font-size:13px;color:#000;-webkit-text-stroke:0.25px #000">118569</div>
<div class="t" style="left:-6px;width:300px;text-align:center;top:342px;font-size:13px;color:#000;-webkit-text-stroke:0.25px #000">30.05.2016</div>
<div class="t" style="left:154px;width:300px;text-align:center;top:342px;font-size:13px;color:#000;-webkit-text-stroke:0.25px #000">9598</div>
<div class="t" style="left:344px;width:300px;text-align:center;top:342px;font-size:13px;color:#000;-webkit-text-stroke:0.25px #000">98789</div>
<div class="t" style="left:-6px;width:300px;text-align:center;top:362px;font-size:13px;color:#000;-webkit-text-stroke:0.25px #000">31.05.2016</div>
<div class="t" style="left:154px;width:300px;text-align:center;top:362px;font-size:13px;color:#000;-webkit-text-stroke:0.25px #000">14521</div>
<div class="t" style="left:344px;width:300px;text-align:center;top:362px;font-size:13px;color:#000;-webkit-text-stroke:0.25px #000">154899</div>
<div class="t" style="left:-6px;width:300px;text-align:center;top:382px;font-size:13px;color:#000;-webkit-text-stroke:0.25px #000">01.06.2016</div>
<div class="t" style="left:154px;width:300px;text-align:center;top:382px;font-size:13px;color:#000;-webkit-text-stroke:0.25px #000">12145</div>
<div class="t" style="left:344px;width:300px;text-align:center;top:382px;font-size:13px;color:#000;-webkit-text-stroke:0.25px #000">135263</div>
<div class="t" style="left:-6px;width:300px;text-align:center;top:402px;font-size:13px;color:#000;-webkit-text-stroke:0.25px #000">02.06.2016</div>
<div class="t" style="left:154px;width:300px;text-align:center;top:402px;font-size:13px;color:#000;-webkit-text-stroke:0.25px #000">9365</div>
<div class="t" style="left:344px;width:300px;text-align:center;top:402px;font-size:13px;color:#000;-webkit-text-stroke:0.25px #000">95452</div>
<div class="t" style="left:-6px;width:300px;text-align:center;top:422px;font-size:13px;color:#000;-webkit-text-stroke:0.25px #000">03.06.2016</div>
<div class="t" style="left:154px;width:300px;text-align:center;top:422px;font-size:13px;color:#000;-webkit-text-stroke:0.25px #000">9956</div>
<div class="t" style="left:344px;width:300px;text-align:center;top:422px;font-size:13px;color:#000;-webkit-text-stroke:0.25px #000">100045</div>
<div class="t" style="left:-6px;width:300px;text-align:center;top:442px;font-size:13px;color:#000;-webkit-text-stroke:0.25px #000">04.06.2016</div>
<div class="t" style="left:154px;width:300px;text-align:center;top:442px;font-size:13px;color:#000;-webkit-text-stroke:0.25px #000">9678</div>
<div class="t" style="left:344px;width:300px;text-align:center;top:442px;font-size:13px;color:#000;-webkit-text-stroke:0.25px #000">99569</div>
<div class="t" style="left:-6px;width:300px;text-align:center;top:462px;font-size:13px;color:#000;-webkit-text-stroke:0.25px #000">05.06.2016</div>
<div class="t" style="left:154px;width:300px;text-align:center;top:462px;font-size:13px;color:#000;-webkit-text-stroke:0.25px #000">10325</div>
<div class="t" style="left:344px;width:300px;text-align:center;top:462px;font-size:13px;color:#000;-webkit-text-stroke:0.25px #000">105265</div>
<div class="a" style="left:839px;top:198px;width:16px;height:494px;background:linear-gradient(90deg,#e3e7ec,#eef1f4)"></div>
<div class="a" style="left:839px;top:198px;width:1px;height:494px;background:#c6ccd3"></div>
<div class="a" style="left:839px;top:193px;width:15px;height:4px;background:linear-gradient(#f4f6f8,#dfe3e8);border:1px solid #b9c0c8"></div>
<div class="a" style="left:840px;top:199px;width:14px;height:7px;background:linear-gradient(#fdfdfe,#e6eaee);border:1px solid #9ea6af"></div>
<div class="a" style="left:843px;top:201px;width:8px;height:1px;background:#707880"></div>
<div class="a" style="left:839px;top:205px;width:16px;height:18px;background:linear-gradient(90deg,#dde1e6,#e9ecef)"></div>
<svg class="a" style="left:841px;top:210px" width="10" height="6"><polygon points="0,6 10,6 5,0" fill="#4a5058"/></svg>
<div class="a" style="left:840px;top:223px;width:13px;height:431px;background:linear-gradient(90deg,#fbfcfd,#e8ebef 70%,#dde1e6);border:1px solid #a5adb6;border-radius:2px"></div>
<div class="a" style="left:842px;top:436px;width:8px;height:1px;background:#6f7780"></div>
<div class="a" style="left:842px;top:438px;width:8px;height:1px;background:#6f7780"></div>
<div class="a" style="left:842px;top:440px;width:8px;height:1px;background:#6f7780"></div>
<div class="a" style="left:842px;top:442px;width:8px;height:1px;background:#6f7780"></div>
<svg class="a" style="left:841px;top:680px" width="10" height="6"><polygon points="0,0 10,0 5,6" fill="#4a5058"/></svg>
<div class="a" style="left:38px;top:693px;width:801px;height:15px;background:linear-gradient(#e3e7eb,#d9dee4)"></div>
<div class="a" style="left:38px;top:707px;width:817px;height:1px;background:#8e969f"></div>
<svg class="a" style="left:43px;top:696px" width="54" height="8" viewBox="0 0 54 8">
<rect x="0.5" y="0" width="1.6" height="7" fill="#3a4048"/><polygon points="7,0 7,7 2.5,3.5" fill="#3a4048"/>
<polygon points="21,0 21,7 16.5,3.5" fill="#3a4048"/>
<polygon points="31,0 31,7 35.5,3.5" fill="#3a4048"/>
<polygon points="45,0 45,7 49.5,3.5" fill="#3a4048"/><rect x="49.5" y="0" width="1.6" height="7" fill="#3a4048"/>
</svg>
<div class="a" style="left:100px;top:693px;width:1px;height:14px;background:#b6bdc5"></div>
<div class="a" style="left:101px;top:693px;width:1px;height:14px;background:#f4f6f8"></div>
<svg class="a" style="left:107px;top:693px" width="15" height="15"><path d="M0.5 14.5 L13.5 0.5" stroke="#9ba3ad" fill="none"/><path d="M1.5 14.5 L14 1" stroke="#f7f8fa" fill="none"/><polygon points="0,15 6,15 3,11" fill="#c5cbd2"/></svg>
<svg class="a" style="left:161px;top:693px" width="15" height="15"><path d="M0.5 14.5 L13.5 0.5" stroke="#9ba3ad" fill="none"/><path d="M1.5 14.5 L14 1" stroke="#f7f8fa" fill="none"/><polygon points="0,15 6,15 3,11" fill="#c5cbd2"/></svg>
<svg class="a" style="left:214px;top:693px" width="15" height="15"><path d="M0.5 14.5 L13.5 0.5" stroke="#9ba3ad" fill="none"/><path d="M1.5 14.5 L14 1" stroke="#f7f8fa" fill="none"/><polygon points="0,15 6,15 3,11" fill="#c5cbd2"/></svg>
<svg class="a" style="left:267px;top:693px" width="15" height="15"><path d="M0.5 14.5 L13.5 0.5" stroke="#9ba3ad" fill="none"/><path d="M1.5 14.5 L14 1" stroke="#f7f8fa" fill="none"/><polygon points="0,15 6,15 3,11" fill="#c5cbd2"/></svg>
<svg class="a" style="left:321px;top:693px" width="15" height="15"><path d="M0.5 14.5 L13.5 0.5" stroke="#9ba3ad" fill="none"/><path d="M1.5 14.5 L14 1" stroke="#f7f8fa" fill="none"/><polygon points="0,15 6,15 3,11" fill="#c5cbd2"/></svg>
<svg class="a" style="left:382px;top:693px" width="15" height="15"><path d="M0.5 14.5 L13.5 0.5" stroke="#9ba3ad" fill="none"/><path d="M1.5 14.5 L14 1" stroke="#f7f8fa" fill="none"/><polygon points="0,15 6,15 3,11" fill="#c5cbd2"/></svg>
<div class="t" style="left:121px;top:694px;font-size:12px;line-height:14px;color:#262c34">Лист7</div>
<div class="t" style="left:173px;top:694px;font-size:12px;line-height:14px;color:#262c34">Лист5</div>
<div class="t" style="left:226px;top:694px;font-size:12px;line-height:14px;color:#262c34">Лист8</div>
<div class="t" style="left:280px;top:694px;font-size:12px;line-height:14px;color:#262c34">Лист9</div>
<div class="t" style="left:334px;top:694px;font-size:12px;line-height:14px;color:#262c34">Лист10</div>
<div class="t" style="left:394px;top:694px;font-size:12px;line-height:14px;color:#262c34">Лист11</div>
<svg class="a" style="left:444px;top:692px" width="66" height="16"><polygon points="0,0 64,0 50.5,15 0,15" fill="#fff"/><path d="M0.5 0 V15" stroke="#a2aab3"/><path d="M64 0.5 L50.5 15" stroke="#9ba3ad"/></svg>
<div class="t" style="left:453px;top:694px;font-size:12px;line-height:14px;color:#1e2228;font-weight:bold;letter-spacing:0.2px">Лист1</div>
<div class="t" style="left:509px;top:694px;font-size:12px;line-height:14px;color:#262c34">Ли</div>
<div class="a" style="left:519px;top:693px;width:8px;height:15px;background:linear-gradient(90deg,#f7f8fa,#e3e6ea);border:1px solid #8a929b"></div>
<div class="a" style="left:522px;top:697px;width:1px;height:7px;background:#666"></div>
<div class="a" style="left:527px;top:693px;width:312px;height:15px;background:linear-gradient(#e5e8ec,#dadfe4)"></div>
<svg class="a" style="left:530px;top:696px" width="6" height="9"><polygon points="6,0 6,9 0,4.5" fill="#4a5058"/></svg>
<div class="a" style="left:543px;top:693px;width:236px;height:14px;background:linear-gradient(#fbfcfd,#eceff2 50%,#dfe3e7);border:1px solid #a5adb6;border-radius:2px"></div>
<div class="a" style="left:658px;top:697px;width:1px;height:7px;background:#6f7780"></div>
<div class="a" style="left:660px;top:697px;width:1px;height:7px;background:#6f7780"></div>
<div class="a" style="left:662px;top:697px;width:1px;height:7px;background:#6f7780"></div>
<div class="a" style="left:664px;top:697px;width:1px;height:7px;background:#6f7780"></div>
<svg class="a" style="left:819px;top:696px" width="6" height="9"><polygon points="0,0 0,9 6,4.5" fill="#4a5058"/></svg>
<div class="a" style="left:831px;top:693px;width:8px;height:15px;background:linear-gradient(90deg,#f7f8fa,#e3e6ea);border:1px solid #8a929b"></div>
<div class="a" style="left:834px;top:697px;width:1px;height:7px;background:#666"></div>
<div class="a" style="left:839px;top:693px;width:16px;height:15px;background:#dfe3e8"></div>
<div class="a" style="left:38px;top:708px;width:817px;height:23px;background:linear-gradient(#eef0f3 0px,#e6e9ed 8px,#d8dde2 16px,#cfd4da 22px);border-bottom:1px solid #8f98a2"></div>
<div class="t" style="left:47px;top:712px;font-size:11.5px;line-height:14px;color:#262c34">Готово</div>
<div class="a" style="left:92px;top:710px;width:1px;height:20px;background:#a9b0b8"></div>
<div class="a" style="left:93px;top:710px;width:1px;height:20px;background:#f4f6f8"></div>
<svg class="a" style="left:100px;top:711px" width="18" height="16" viewBox="0 0 18 16">
<rect x="1.5" y="3.5" width="15" height="11" fill="#fff" stroke="#3a64a8"/>
<rect x="1.5" y="3.5" width="15" height="3" fill="#3a64a8"/>
<path d="M3 8.5 H6 M8 8.5 H15 M3 10.5 H6 M8 10.5 H15 M3 12.5 H6 M8 12.5 H15" stroke="#4f7fc8"/>
<circle cx="4" cy="3.5" r="3" fill="#e23a2a"/>
</svg>
<div class="a" style="left:127px;top:710px;width:1px;height:20px;background:#a9b0b8"></div>
<div class="a" style="left:128px;top:710px;width:1px;height:20px;background:#f4f6f8"></div>
<div class="t" style="left:297px;top:712px;font-size:11.2px;line-height:14px;color:#262c34">Среднее: 111189,5</div>
<div class="t" style="left:409px;top:712px;font-size:11.2px;line-height:14px;color:#262c34">Количество: 13</div>
<div class="t" style="left:505px;top:712px;font-size:11.2px;line-height:14px;color:#262c34;letter-spacing:-0.4px">Сумма: 1334274</div>
<div class="a" style="left:598px;top:710px;width:1px;height:20px;background:#a9b0b8"></div>
<div class="a" style="left:599px;top:710px;width:1px;height:20px;background:#f4f6f8"></div>
<div class="a" style="left:603px;top:710px;width:19px;height:19px;background:linear-gradient(#fde9a6 0%,#fcd46b 45%,#fcd055 55%,#fde38b 100%);border:1px solid #d5a64a;border-radius:3px;box-shadow:inset 0 0 0 1px rgba(255,248,210,0.6)"></div>
<svg class="a" style="left:606px;top:713px" width="13" height="12" viewBox="0 0 13 12">
<rect x="0.5" y="0.5" width="12" height="11" fill="#fff" stroke="#3a4048"/>
<path d="M0.5 3.5 H12.5 M0.5 6.5 H12.5 M0.5 9 H12.5 M4.5 0.5 V11.5 M8.5 0.5 V11.5" stroke="#3a4048"/>
</svg>
<svg class="a" style="left:623px;top:712px" width="14" height="13" viewBox="0 0 14 13">
<rect x="0.5" y="0.5" width="13" height="12" fill="#fff" stroke="#555c64"/>
<rect x="3.5" y="2.5" width="7" height="8" fill="#f2f2f2" stroke="#6a7078"/>
<path d="M5 5 H9 M5 7 H9" stroke="#888"/>
</svg>
<svg class="a" style="left:642px;top:712px" width="14" height="13" viewBox="0 0 14 13">
<rect x="0.5" y="0.5" width="13" height="12" fill="#fff" stroke="#555c64"/>
<rect x="1" y="1" width="4" height="11" fill="#666"/><rect x="6" y="1" width="3" height="7" fill="#666"/>
</svg>
<div class="t" style="left:667px;top:712px;font-size:11.2px;line-height:14px;color:#262c34">100%</div>
<svg class="a" style="left:701px;top:709px" width="130" height="20" viewBox="0 0 130 20">
<defs><linearGradient id="zc" x1="0" y1="0" x2="0" y2="1"><stop offset="0" stop-color="#fdfdfd"/><stop offset="1" stop-color="#d6dadf"/></linearGradient></defs>
<line x1="17" y1="10.5" x2="117" y2="10.5" stroke="#8b939c"/>
<line x1="17" y1="11.5" x2="117" y2="11.5" stroke="#f7f8f9"/>
<circle cx="9.7" cy="10" r="8" fill="url(#zc)" stroke="#6f7780"/>
<rect x="5.7" y="9" width="8" height="2.2" fill="#3a4048"/>
<circle cx="125.7" cy="10" r="8" fill="url(#zc)" stroke="#6f7780"/>
<rect x="121.7" y="9" width="8" height="2.2" fill="#3a4048"/><rect x="124.6" y="6" width="2.2" height="8" fill="#3a4048"/>
<path d="M63.5 3.5 H73.5 V11.5 L68.5 16.5 L63.5 11.5 Z" fill="#f4f5f7" stroke="#6f7780"/>
</svg>
<svg class="a" style="left:844px;top:719px" width="10" height="10" viewBox="0 0 10 10">
<rect x="7" y="1" width="2" height="2" fill="#b5bcc4"/><rect x="4" y="4" width="2" height="2" fill="#b5bcc4"/><rect x="7" y="4" width="2" height="2" fill="#b5bcc4"/>
<rect x="1" y="7" width="2" height="2" fill="#b5bcc4"/><rect x="4" y="7" width="2" height="2" fill="#b5bcc4"/><rect x="7" y="7" width="2" height="2" fill="#b5bcc4"/>
</svg>
<div class="a" style="left:591px;top:177px;width:249px;height:51px;background:#fff;border:1px solid #a7aeb6;border-radius:2px;box-shadow:1px 1px 2px rgba(0,0,0,0.25)"></div>
<div class="a" style="left:593px;top:179px;width:61px;height:22px;background:#fff;border:1px solid #c3cad3"></div>
<div class="t" style="left:596px;top:183px;font-size:12px;line-height:14px;color:#1c1c1c">Calibri</div>
<svg class="a" style="left:643.5px;top:188.5px" width="5" height="3"><polygon points="0,0 5,0 2.5,3" fill="#5b626b"/></svg>
<div class="a" style="left:653px;top:179px;width:41px;height:22px;background:#fff;border:1px solid #c3cad3"></div>
<div class="t" style="left:657px;top:183px;font-size:12px;line-height:14px;color:#1c1c1c">11</div>
<svg class="a" style="left:683.5px;top:188.5px" width="5" height="3"><polygon points="0,0 5,0 2.5,3" fill="#5b626b"/></svg>
<div class="t" style="left:697px;top:180px;font-family:'Liberation Serif';font-weight:bold;font-size:16px;line-height:18px;color:#2b2b2b">A</div>
<svg class="a" style="left:708px;top:182px" width="6" height="4"><polygon points="0,4 6,4 3,0" fill="#2d62b8"/></svg>
<div class="t" style="left:720px;top:185px;font-family:'Liberation Serif';font-weight:bold;font-size:11px;line-height:13px;color:#2b2b2b">A</div>
<svg class="a" style="left:727px;top:183px" width="6" height="4"><polygon points="0,0 6,0 3,4" fill="#2d62b8"/></svg>
<svg class="a" style="left:740px;top:182px" width="18" height="18" viewBox="0 0 18 18">
<rect x="0.5" y="0.5" width="16" height="9" fill="#4f86d6" stroke="#2c5aa6"/>
<ellipse cx="8.5" cy="5" rx="5" ry="3" fill="none" stroke="#d6e6fb"/>
<ellipse cx="12" cy="11" rx="4" ry="1.6" fill="#f3b73b" stroke="#b57b10" stroke-width="0.6"/>
<ellipse cx="12" cy="13.5" rx="4" ry="1.6" fill="#f3b73b" stroke="#b57b10" stroke-width="0.6"/>
<ellipse cx="12" cy="16" rx="4" ry="1.6" fill="#f3b73b" stroke="#b57b10" stroke-width="0.6"/>
<ellipse cx="4" cy="14" rx="3" ry="1.3" fill="#f3b73b" stroke="#b57b10" stroke-width="0.6"/>
</svg>
<svg class="a" style="left:762.5px;top:188.5px" width="5" height="3"><polygon points="0,0 5,0 2.5,3" fill="#5b626b"/></svg>
<div class="t" style="left:776px;top:183px;font-size:13px;line-height:14px;color:#1c1c1c">%</div>
<div class="t" style="left:797px;top:183px;font-size:13px;line-height:14px;color:#1c1c1c;letter-spacing:-1.6px">000</div>
<svg class="a" style="left:819px;top:182px" width="17" height="16" viewBox="0 0 17 16">
<rect x="0.5" y="0.5" width="16" height="15" fill="#c9dcf5" stroke="#3f5f94"/>
<path d="M0.5 3.5 H16.5 M0.5 12.5 H16.5 M8.5 0.5 V3.5 M8.5 12.5 V15.5" stroke="#3f5f94"/>
<rect x="1" y="4" width="15" height="8" fill="#fff"/>
<path d="M1.5 8 H5 M12 8 H15.5" stroke="#222"/><path d="M3.5 6.5 L5 8 L3.5 9.5 M13.5 6.5 L12 8 L13.5 9.5" stroke="#222" fill="none" stroke-width="0.8"/>
<text x="8.5" y="11" text-anchor="middle" font-family="Liberation Serif" font-weight="bold" font-size="10" fill="#111">a</text>
</svg>
<div class="a" style="left:593px;top:204px;width:22px;height:22px;background:linear-gradient(#fde9a6 0%,#fcd46b 45%,#fcd055 55%,#fde38b 100%);border:1px solid #d5a64a;border-radius:3px;box-shadow:inset 0 0 0 1px rgba(255,248,210,0.6)"></div>
<div class="t" style="left:597.5px;top:207.5px;font-family:'Liberation Serif';font-weight:bold;font-size:13.5px;line-height:16px;color:#111">Ж</div>
<div class="t" style="left:621px;top:207.5px;font-family:'Liberation Serif';font-weight:bold;font-style:italic;font-size:13.5px;line-height:16px;color:#111">К</div>
<div class="a" style="left:637px;top:204px;width:22px;height:22px;background:linear-gradient(#fde9a6 0%,#fcd46b 45%,#fcd055 55%,#fde38b 100%);border:1px solid #d5a64a;border-radius:3px;box-shadow:inset 0 0 0 1px rgba(255,248,210,0.6)"></div>
<svg class="a" style="left:641px;top:209px" width="20" height="16"><rect x="0" y="0" width="14" height="1" fill="#1a1a1a"/><rect x="2" y="2" width="10" height="1" fill="#1a1a1a"/><rect x="0" y="5" width="14" height="1" fill="#1a1a1a"/><rect x="2" y="7" width="10" height="1" fill="#1a1a1a"/><rect x="0" y="10" width="14" height="1" fill="#1a1a1a"/></svg>
<svg class="a" style="left:662px;top:206px" width="17" height="18" viewBox="0 0 17 18">
<defs><linearGradient id="bk2" x1="0" y1="0" x2="1" y2="1"><stop offset="0.4" stop-color="#ffffff"/><stop offset="1" stop-color="#9fb8e0"/></linearGradient></defs>
<path d="M2 8.4 L8.5 2.8 L13.9 7.6 L6.7 13 Z" fill="url(#bk2)" stroke="#22386a" stroke-width="1" stroke-dasharray="1.2 0.6"/>
<path d="M6 4.5 C5 1 8.5 0 9.5 2.5" stroke="#4a5a8a" stroke-width="0.9" fill="none"/>
<path d="M8.8 2.5 L9.2 6.5" stroke="#666" stroke-width="1.3"/>
<path d="M12.8 5.8 C15.5 6 16.8 9.5 15.6 12.5 C14.6 11.5 14.2 9.5 13.6 8.2 Z" fill="#2f6ad0"/>
<rect x="0" y="13" width="16" height="3.8" fill="#0fae45"/>
</svg>
<svg class="a" style="left:683.5px;top:212.5px" width="5" height="3"><polygon points="0,0 5,0 2.5,3" fill="#5b626b"/></svg>
<div class="t" style="left:697px;top:204px;font-family:'Liberation Serif';font-weight:bold;font-size:16px;line-height:16px;color:#234c9a">A</div>
<div class="a" style="left:696px;top:219px;width:17px;height:4px;background:#ee1c1c"></div>
<svg class="a" style="left:717.5px;top:212.5px" width="5" height="3"><polygon points="0,0 5,0 2.5,3" fill="#5b626b"/></svg>
<svg class="a" style="left:732px;top:208px" width="14" height="14" viewBox="0 0 14 14">
<path d="M0.5 0.5 H13.5 V13 M0.5 0.5 V13 M7 1 V13 M1 7 H13" stroke="#666" stroke-dasharray="1 1" fill="none"/>
<path d="M0 13.5 H14" stroke="#111"/>
</svg>
<svg class="a" style="left:751.5px;top:212.5px" width="5" height="3"><polygon points="0,0 5,0 2.5,3" fill="#5b626b"/></svg>
<svg class="a" style="left:763px;top:207px" width="18" height="16" viewBox="0 0 18 16">
<path d="M1 4 L7 4 M1 4 L3.5 1.5 M1 4 L3.5 6.5" stroke="#2a62d4" stroke-width="1.3" fill="none"/>
<text x="7" y="8" font-family="Liberation Sans" font-size="9" fill="#111">,0</text>
<text x="2" y="15.5" font-family="Liberation Sans" font-size="9" fill="#111">,00</text>
</svg>
<svg class="a" style="left:785px;top:207px" width="18" height="16" viewBox="0 0 18 16">
<text x="2" y="8" font-family="Liberation Sans" font-size="9" fill="#111">,00</text>
<path d="M1 12 L7 12 M7 12 L4.5 9.5 M7 12 L4.5 14.5" stroke="#2a62d4" stroke-width="1.3" fill="none"/>
<text x="7" y="15.5" font-family="Liberation Sans" font-size="9" fill="#111">,0</text>
</svg>
<svg class="a" style="left:808px;top:207px" width="17" height="15" viewBox="0 0 17 15">
<defs><linearGradient id="bri2" x1="0" y1="0" x2="1" y2="1"><stop offset="0" stop-color="#fff5b8"/><stop offset="0.6" stop-color="#f7d04a"/><stop offset="1" stop-color="#d99a1c"/></linearGradient></defs>
<path d="M14.8 1.2 L11 5" stroke="#2c3f9a" stroke-width="3.6" stroke-linecap="round"/>
<path d="M14.8 1.2 L11.5 4.5" stroke="#5a86e8" stroke-width="1.6" stroke-linecap="round"/>
<polygon points="4.6,5.1 7.6,2.6 14,8.2 11.4,10.6" fill="#b9bec6" stroke="#3d434b" stroke-width="0.8"/>
<path d="M6.5 4.5 L12.5 9.5 M8.5 3.7 L13 7.8" stroke="#eef0f2" stroke-width="0.7"/>
<polygon points="0.3,7.4 4.6,5.1 11.4,10.6 7.4,14.6" fill="url(#bri2)" stroke="#5a4a2a" stroke-width="0.6"/>
</svg>
<div class="a" style="left:591px;top:244px;width:183px;height:278px;background:#fff;border:1px solid #a0a6ad;box-shadow:2px 2px 3px rgba(0,0,0,0.3)"></div>
<div class="a" style="left:617px;top:245px;width:1px;height:276px;background:#e2e4e7"></div>
<div class="a" style="left:619px;top:289px;width:153px;height:17px;background:#e8eaed"></div>
<div class="t" style="left:626px;top:250px;font-size:12px;line-height:14px;color:#1e1e1e;letter-spacing:-0.2px;">В<u>ы</u>резать</div>
<div class="t" style="left:626px;top:272px;font-size:12px;line-height:14px;color:#1e1e1e;letter-spacing:-0.2px;"><u>К</u>опировать</div>
<div class="t" style="left:626px;top:292px;font-size:12px;line-height:14px;color:#1e1e1e;letter-spacing:-0.2px;font-weight:bold;font-size:11px;letter-spacing:-0.1px">Параметры вставки:</div>
<div class="t" style="left:626px;top:341px;font-size:12px;line-height:14px;color:#1e1e1e;letter-spacing:-0.2px;color:#9a9a9a"><u>С</u>пециальная вставка...</div>
<div class="a" style="left:625px;top:360px;width:147px;height:1px;background:repeating-linear-gradient(90deg,#b6b9bd 0 2px,transparent 2px 4px)"></div>
<div class="t" style="left:626px;top:367px;font-size:12px;line-height:14px;color:#1e1e1e;letter-spacing:-0.2px;"><u>В</u>ставить</div>
<div class="t" style="left:626px;top:389px;font-size:12px;line-height:14px;color:#1e1e1e;letter-spacing:-0.2px;"><u>У</u>далить</div>
<div class="t" style="left:626px;top:411px;font-size:12px;line-height:14px;color:#1e1e1e;letter-spacing:-0.2px;">Очистить содер<u>ж</u>имое</div>
<div class="a" style="left:625px;top:430px;width:147px;height:1px;background:repeating-linear-gradient(90deg,#b6b9bd 0 2px,transparent 2px 4px)"></div>
<div class="t" style="left:626px;top:438px;font-size:12px;line-height:14px;color:#1e1e1e;letter-spacing:-0.2px;">Формат <u>я</u>чеек...</div>
<div class="t" style="left:626px;top:459px;font-size:12px;line-height:14px;color:#1e1e1e;letter-spacing:-0.2px;">Ш<u>и</u>рина столбца...</div>
<div class="t" style="left:626px;top:481px;font-size:12px;line-height:14px;color:#1e1e1e;letter-spacing:-0.2px;"><u>С</u>крыть</div>
<div class="t" style="left:626px;top:503px;font-size:12px;line-height:14px;color:#1e1e1e;letter-spacing:-0.2px;"><u>П</u>оказать</div>
<svg class="a" style="left:598px;top:249px" width="12" height="15" viewBox="0 0 12 15">
<path d="M3 0.5 L6.8 8.5 M9.5 0.5 L5.6 8.5" stroke="#5a626c" stroke-width="1.4"/>
<ellipse cx="3.6" cy="11.2" rx="2.2" ry="2.6" transform="rotate(25 3.6 11.2)" fill="#fff" stroke="#2456c0" stroke-width="1.7"/>
<ellipse cx="8.6" cy="11.2" rx="2.2" ry="2.6" transform="rotate(-25 8.6 11.2)" fill="#fff" stroke="#1f4aa8" stroke-width="1.7"/>
</svg>
<svg class="a" style="left:597px;top:271px" width="17" height="14" viewBox="0 0 17 14">
<rect x="1.5" y="0.5" width="8" height="9" fill="#fff" stroke="#5a6f95"/>
<rect x="6.5" y="4.5" width="9" height="9" fill="#f2f6fc" stroke="#2b4f8c"/>
<path d="M8.5 7.5 H13.5 M8.5 9.5 H13.5 M8.5 11.5 H13.5" stroke="#2b4f8c"/>
</svg>
<svg class="a" style="left:597px;top:290px" width="17" height="17" viewBox="0 0 17 17">
<rect x="0.5" y="2.5" width="11" height="13" rx="1" fill="#d9d9d9" stroke="#a9a9a9"/>
<rect x="3" y="1" width="6" height="3" fill="#f2f2f2" stroke="#a9a9a9" stroke-width="0.8"/>
<path d="M6.5 7.5 H13 L16 10.5 V16.5 H6.5 Z" fill="#f4f4f4" stroke="#a9a9a9"/>
<path d="M8 11 H14 M8 13 H14" stroke="#c4c4c4"/>
</svg>
<div class="a" style="left:622px;top:310px;width:24px;height:24px;background:linear-gradient(#f4f5f6,#e4e6e8);border:1px solid #c9ccd0;border-radius:2px"></div>
<svg class="a" style="left:626px;top:312px" width="17" height="20" viewBox="0 0 17 20">
<rect x="0.5" y="2.5" width="13" height="15" rx="1" fill="#d6d6d6" stroke="#b0b0b0"/>
<rect x="3.5" y="1" width="7" height="3" fill="#f2f2f2" stroke="#b0b0b0" stroke-width="0.8"/>
<path d="M5.5 8.5 H12 L15.5 12 V19.5 H5.5 Z" fill="#f6f6f6" stroke="#b8b8b8"/>
<path d="M7 12 H13 M7 14 H13 M7 16 H13" stroke="#cfcfcf"/>
</svg>
<svg class="a" style="left:597px;top:437px" width="18" height="16" viewBox="0 0 18 16">
<rect x="0.5" y="5.5" width="13" height="10" fill="#f4f7fb" stroke="#4a5f80"/>
<path d="M2 8.5 H12 M2 10.5 H12 M2 12.5 H12" stroke="#7d93b5"/>
<path d="M3 6 L9 1 L13 5 L10 7" fill="#f2c94c" stroke="#9c7a1c" stroke-width="0.8"/>
<path d="M12 4 L17 0.5 V4 Z" fill="#3aa33a"/>
</svg>
<div class="a" style="left:88px;top:79px;width:43px;height:40px;border:5px solid #f00d0d;border-radius:13px;box-shadow:1px 2px 3px rgba(0,0,0,0.35), inset 1px 2px 4px rgba(0,0,0,0.35)"></div>
<div class="a" style="left:588px;top:242px;width:116px;height:31px;border:5px solid #f00d0d;border-radius:14px;box-shadow:1px 2px 3px rgba(0,0,0,0.35), inset 1px 2px 4px rgba(0,0,0,0.3)"></div>
<svg class="a" style="left:0;top:0;mix-blend-mode:screen" width="897" height="772"><defs><clipPath id="outw"><path clip-rule="evenodd" d="M0 0 H897 V772 H0 Z M32 32 H860 V736 H32 Z"/></clipPath></defs><g clip-path="url(#outw)" font-family="Liberation Serif" font-style="italic" font-weight="bold" font-size="19.5" fill="rgb(15,35,140)" stroke="rgb(55,100,185)" stroke-width="0.8"><text transform="translate(23,93.6) rotate(-18.7) skewX(-14) scale(1,0.7)" textLength="190" lengthAdjust="spacing">Soringpcrepair.Com</text><text transform="translate(23,213.6) rotate(-18.7) skewX(-14) scale(1,0.7)" textLength="190" lengthAdjust="spacing">Soringpcrepair.Com</text><text transform="translate(23,333.6) rotate(-18.7) skewX(-14) scale(1,0.7)" textLength="190" lengthAdjust="spacing">Soringpcrepair.Com</text><text transform="translate(23,453.6) rotate(-18.7) skewX(-14) scale(1,0.7)" textLength="190" lengthAdjust="spacing">Soringpcrepair.Com</text><text transform="translate(23,573.6) rotate(-18.7) skewX(-14) scale(1,0.7)" textLength="190" lengthAdjust="spacing">Soringpcrepair.Com</text><text transform="translate(23,693.6) rotate(-18.7) skewX(-14) scale(1,0.7)" textLength="190" lengthAdjust="spacing">Soringpcrepair.Com</text><text transform="translate(23,813.6) rotate(-18.7) skewX(-14) scale(1,0.7)" textLength="190" lengthAdjust="spacing">Soringpcrepair.Com</text><text transform="translate(317,93.6) rotate(-18.7) skewX(-14) scale(1,0.7)" textLength="190" lengthAdjust="spacing">Soringpcrepair.Com</text><text transform="translate(317,213.6) rotate(-18.7) skewX(-14) scale(1,0.7)" textLength="190" lengthAdjust="spacing">Soringpcrepair.Com</text><text transform="translate(317,333.6) rotate(-18.7) skewX(-14) scale(1,0.7)" textLength="190" lengthAdjust="spacing">Soringpcrepair.Com</text><text transform="translate(317,453.6) rotate(-18.7) skewX(-14) scale(1,0.7)" textLength="190" lengthAdjust="spacing">Soringpcrepair.Com</text><text transform="translate(317,573.6) rotate(-18.7) skewX(-14) scale(1,0.7)" textLength="190" lengthAdjust="spacing">Soringpcrepair.Com</text><text transform="translate(317,693.6) rotate(-18.7) skewX(-14) scale(1,0.7)" textLength="190" lengthAdjust="spacing">Soringpcrepair.Com</text><text transform="translate(317,813.6) rotate(-18.7) skewX(-14) scale(1,0.7)" textLength="190" lengthAdjust="spacing">Soringpcrepair.Com</text><text transform="translate(608,93.6) rotate(-18.7) skewX(-14) scale(1,0.7)" textLength="190" lengthAdjust="spacing">Soringpcrepair.Com</text><text transform="translate(608,213.6) rotate(-18.7) skewX(-14) scale(1,0.7)" textLength="190" lengthAdjust="spacing">Soringpcrepair.Com</text><text transform="translate(608,333.6) rotate(-18.7) skewX(-14) scale(1,0.7)" textLength="190" lengthAdjust="spacing">Soringpcrepair.Com</text><text transform="translate(608,453.6) rotate(-18.7) skewX(-14) scale(1,0.7)" textLength="190" lengthAdjust="spacing">Soringpcrepair.Com</text><text transform="translate(608,573.6) rotate(-18.7) skewX(-14) scale(1,0.7)" textLength="190" lengthAdjust="spacing">Soringpcrepair.Com</text><text transform="translate(608,693.6) rotate(-18.7) skewX(-14) scale(1,0.7)" textLength="190" lengthAdjust="spacing">Soringpcrepair.Com</text><text transform="translate(608,813.6) rotate(-18.7) skewX(-14) scale(1,0.7)" textLength="190" lengthAdjust="spacing">Soringpcrepair.Com</text></g></svg>
<svg class="a" style="left:0;top:0" width="897" height="772"><defs><clipPath id="inw"><rect x="32" y="32" width="828" height="704"/></clipPath></defs><g clip-path="url(#inw)" font-family="Liberation Serif" font-style="italic" font-weight="bold" font-size="19.5" fill="rgba(100,120,205,0.09)" stroke="rgba(70,90,185,0.28)" stroke-width="0.7"><text transform="translate(23,93.6) rotate(-18.7) skewX(-14) scale(1,0.7)" textLength="190" lengthAdjust="spacing">Soringpcrepair.Com</text><text transform="translate(23,213.6) rotate(-18.7) skewX(-14) scale(1,0.7)" textLength="190" lengthAdjust="spacing">Soringpcrepair.Com</text><text transform="translate(23,333.6) rotate(-18.7) skewX(-14) scale(1,0.7)" textLength="190" lengthAdjust="spacing">Soringpcrepair.Com</text><text transform="translate(23,453.6) rotate(-18.7) skewX(-14) scale(1,0.7)" textLength="190" lengthAdjust="spacing">Soringpcrepair.Com</text><text transform="translate(23,573.6) rotate(-18.7) skewX(-14) scale(1,0.7)" textLength="190" lengthAdjust="spacing">Soringpcrepair.Com</text><text transform="translate(23,693.6) rotate(-18.7) skewX(-14) scale(1,0.7)" textLength="190" lengthAdjust="spacing">Soringpcrepair.Com</text><text transform="translate(23,813.6) rotate(-18.7) skewX(-14) scale(1,0.7)" textLength="190" lengthAdjust="spacing">Soringpcrepair.Com</text><text transform="translate(317,93.6) rotate(-18.7) skewX(-14) scale(1,0.7)" textLength="190" lengthAdjust="spacing">Soringpcrepair.Com</text><text transform="translate(317,213.6) rotate(-18.7) skewX(-14) scale(1,0.7)" textLength="190" lengthAdjust="spacing">Soringpcrepair.Com</text><text transform="translate(317,333.6) rotate(-18.7) skewX(-14) scale(1,0.7)" textLength="190" lengthAdjust="spacing">Soringpcrepair.Com</text><text transform="translate(317,453.6) rotate(-18.7) skewX(-14) scale(1,0.7)" textLength="190" lengthAdjust="spacing">Soringpcrepair.Com</text><text transform="translate(317,573.6) rotate(-18.7) skewX(-14) scale(1,0.7)" textLength="190" lengthAdjust="spacing">Soringpcrepair.Com</text><text transform="translate(317,693.6) rotate(-18.7) skewX(-14) scale(1,0.7)" textLength="190" lengthAdjust="spacing">Soringpcrepair.Com</text><text transform="translate(317,813.6) rotate(-18.7) skewX(-14) scale(1,0.7)" textLength="190" lengthAdjust="spacing">Soringpcrepair.Com</text><text transform="translate(608,93.6) rotate(-18.7) skewX(-14) scale(1,0.7)" textLength="190" lengthAdjust="spacing">Soringpcrepair.Com</text><text transform="translate(608,213.6) rotate(-18.7) skewX(-14) scale(1,0.7)" textLength="190" lengthAdjust="spacing">Soringpcrepair.Com</text><text transform="translate(608,333.6) rotate(-18.7) skewX(-14) scale(1,0.7)" textLength="190" lengthAdjust="spacing">Soringpcrepair.Com</text><text transform="translate(608,453.6) rotate(-18.7) skewX(-14) scale(1,0.7)" textLength="190" lengthAdjust="spacing">Soringpcrepair.Com</text><text transform="translate(608,573.6) rotate(-18.7) skewX(-14) scale(1,0.7)" textLength="190" lengthAdjust="spacing">Soringpcrepair.Com</text><text transform="translate(608,693.6) rotate(-18.7) skewX(-14) scale(1,0.7)" textLength="190" lengthAdjust="spacing">Soringpcrepair.Com</text><text transform="translate(608,813.6) rotate(-18.7) skewX(-14) scale(1,0.7)" textLength="190" lengthAdjust="spacing">Soringpcrepair.Com</text></g></svg>
<svg class="a" style="left:877px;top:287px" width="14" height="20" viewBox="0 0 14 20"><path d="M1.5 1.5 L1.5 16.5 L5 13 L8 19 L10 18 L7.2 12.2 L12.5 12.2 Z" fill="#fff" stroke="#000" stroke-width="0.8"/></svg></body></html>
